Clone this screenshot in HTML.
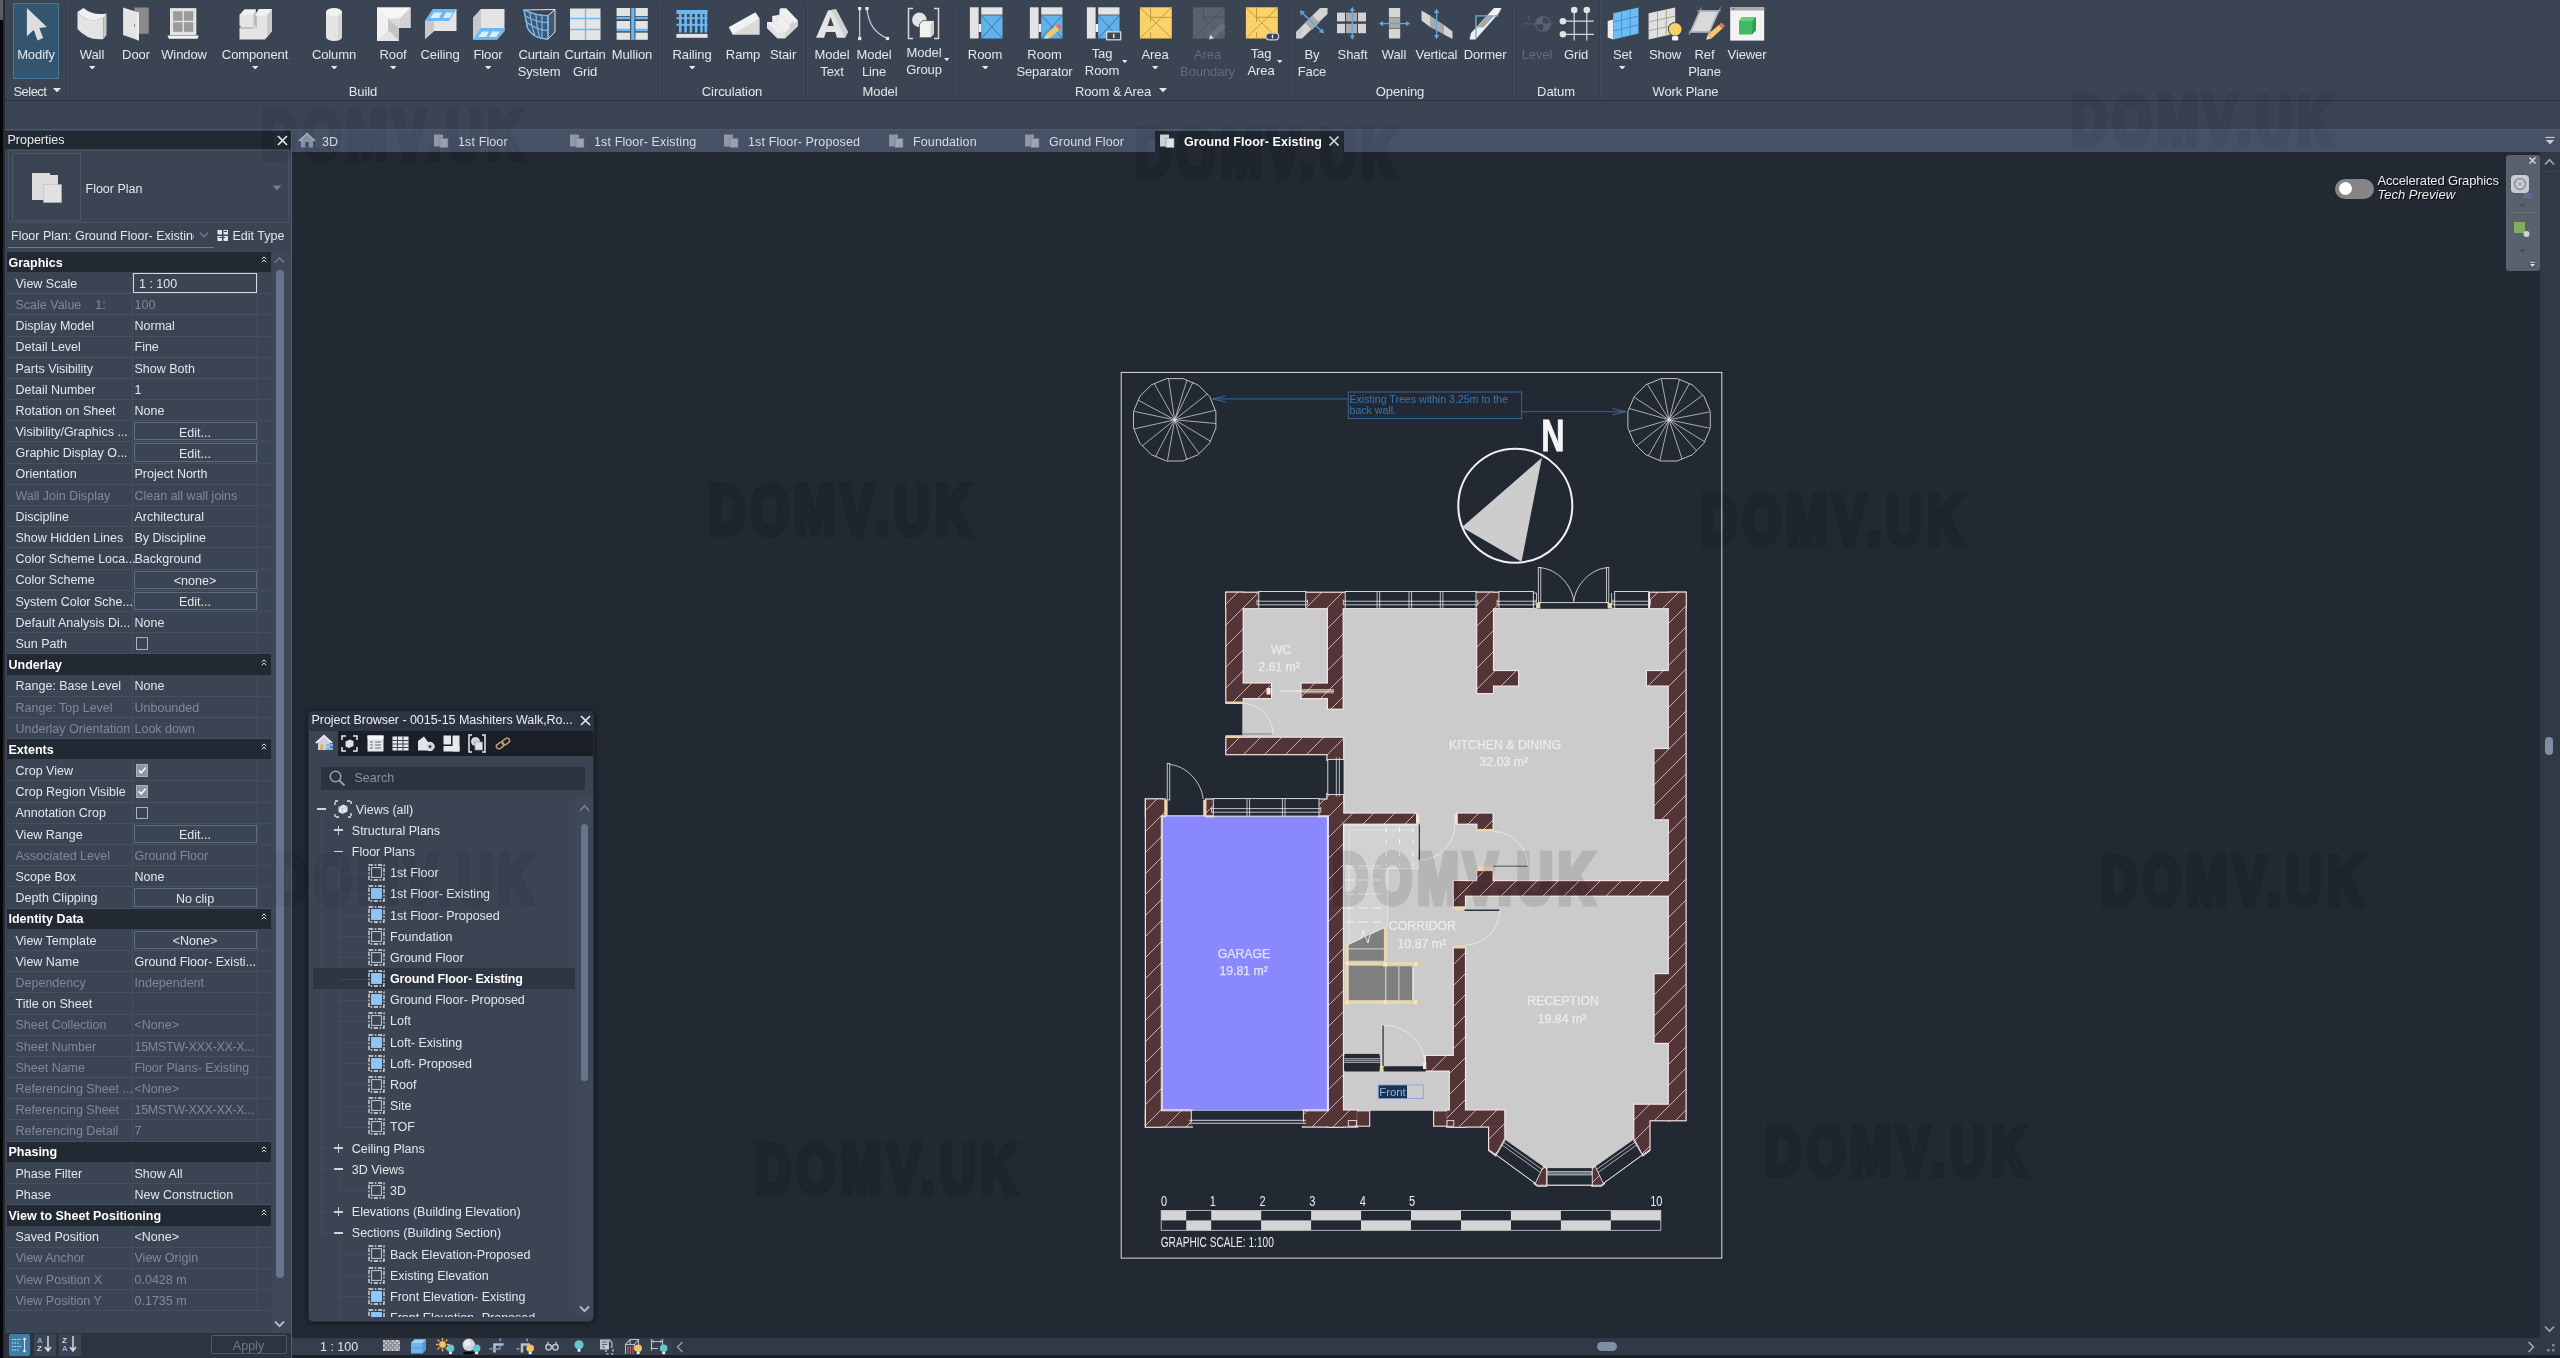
<!DOCTYPE html><html lang="en"><head><meta charset="utf-8"><title>Autodesk Revit - Ground Floor- Existing</title><style>
html,body{margin:0;padding:0;background:#222933;}
body{width:2560px;height:1358px;position:relative;overflow:hidden;font-family:"Liberation Sans",sans-serif;}
.r{position:absolute;display:block;}
#app{position:absolute;left:0;top:0;width:2560px;height:1358px;overflow:hidden;will-change:transform;}
.t{position:absolute;white-space:nowrap;line-height:1;}
.wm{position:absolute;font-family:"Liberation Sans",sans-serif;font-weight:700;font-size:76px;line-height:1;color:rgb(5,5,5);-webkit-text-stroke:7.5px rgb(5,5,5);mix-blend-mode:difference;letter-spacing:8px;transform-origin:0 0;transform:scale(0.655,0.925);white-space:nowrap;}
.wm.n{color:#000;-webkit-text-stroke:7.5px #000;mix-blend-mode:normal;opacity:0.10;}

</style></head><body><div id="app">
<div class="r" style="left:0.00px;top:0.00px;width:2560.00px;height:129.00px;background:#3b4453;"></div>
<div class="r" style="left:4.00px;top:99.60px;width:2556.00px;height:1.70px;background:#2b323d;"></div>
<div class="r" style="left:292.00px;top:128.50px;width:2268.00px;height:23.50px;background:#475165;"></div>
<div class="r" style="left:4.00px;top:128.50px;width:2556.00px;height:1.50px;background:#4f5a6f;"></div>
<div class="r" style="left:292.00px;top:152.00px;width:2268.00px;height:1206.00px;background:#222933;"></div>
<div class="r" style="left:4.00px;top:130.00px;width:288.00px;height:1228.00px;background:#3b4453;"></div>
<div class="r" style="left:290.60px;top:130.00px;width:1.40px;height:1228.00px;background:#535e71;"></div>
<svg class="r" style="left:0;top:0" width="1" height="1"><defs><pattern id="ih" patternUnits="userSpaceOnUse" width="2.6" height="2.6"><rect width="2.6" height="2.6" fill="#e2e2e2"/><path d="M-0.5 3.100 L3.100 -0.5 M-0.5 0.5 L0.5 -0.5 M2.100 3.100 L3.100 2.100" stroke="#b4b4b4" stroke-width="0.750"/></pattern></defs></svg>
<div class="r" style="left:13.00px;top:3.00px;width:46.00px;height:76.00px;background:#34556f;border:1px solid #46769b;box-sizing:border-box;"></div>
<div class="t" style="top:48.00px;font-size:13px;color:#e4e6ea;letter-spacing:-0.1px;left:-164.00px;width:400px;text-align:center;">Modify</div>
<svg class="r" style="left:18.00px;top:4px" width="36" height="40" viewBox="0 0 36 40" overflow="visible"><path d="M8.900 4.100 L8.900 32.300 L15.800 26 L19.500 36.600 L25.100 34.100 L21.400 24.100 L28.900 22.900 Z" fill="#dedede"/></svg>
<div class="t" style="top:48.00px;font-size:13px;color:#e4e6ea;letter-spacing:-0.1px;left:-108.00px;width:400px;text-align:center;">Wall</div>
<svg class="r" style="left:88.75px;top:65.50px" width="6.5" height="3.6" viewBox="0 0 6.5 3.6"><path d="M0 0 H6.5 L3.25 3.6 Z" fill="#e4e6ea"/></svg>
<svg class="r" style="left:74.00px;top:4px" width="36" height="40" viewBox="0 0 36 40" overflow="visible"><path d="M3.500 8 Q14 21 29.500 13.500 L29.500 35 Q14 37 3.500 25 Z" fill="#e4e4e4"/><path d="M3.500 8 L9.500 4 Q19 12 32.500 9.500 L29.500 13.500 Q14 21 3.500 8 Z" fill="#f1f1f1"/><path d="M29.500 13.500 L32.500 9.500 L32.500 31 L29.500 35 Z" fill="#c8c8c8"/></svg>
<div class="t" style="top:48.00px;font-size:13px;color:#e4e6ea;letter-spacing:-0.1px;left:-64.00px;width:400px;text-align:center;">Door</div>
<svg class="r" style="left:118.00px;top:4px" width="36" height="40" viewBox="0 0 36 40" overflow="visible"><rect x="16.400" y="3.500" width="14.400" height="26.300" fill="#8b8b8b"/><path d="M5.100 3.500 L20.800 8.500 L20.800 36.600 L5.100 31 Z" fill="#e4e4e4"/><path d="M18.800 8 L20.800 8.500 L20.800 36.600 L18.800 35.900Z" fill="#f1f1f1"/><rect x="16" y="20" width="1" height="3" fill="#8b8b8b"/></svg>
<div class="t" style="top:48.00px;font-size:13px;color:#e4e6ea;letter-spacing:-0.1px;left:-16.00px;width:400px;text-align:center;">Window</div>
<svg class="r" style="left:166.00px;top:4px" width="36" height="40" viewBox="0 0 36 40" overflow="visible"><rect x="4" y="4.100" width="26.300" height="27" fill="#e4e4e4"/><rect x="7.1" y="7.2" width="9.400" height="9.600" fill="#9b9b9b"/><rect x="7.1" y="18.2" width="9.400" height="9.600" fill="#9b9b9b"/><rect x="17.9" y="7.2" width="9.400" height="9.600" fill="#9b9b9b"/><rect x="17.9" y="18.2" width="9.400" height="9.600" fill="#9b9b9b"/><path d="M1.500 31.600 H32.800 L31.500 34.800 H2.800 Z" fill="#f1f1f1"/></svg>
<div class="t" style="top:48.00px;font-size:13px;color:#e4e6ea;letter-spacing:-0.1px;left:55.00px;width:400px;text-align:center;">Component</div>
<svg class="r" style="left:251.75px;top:65.50px" width="6.5" height="3.6" viewBox="0 0 6.5 3.6"><path d="M0 0 H6.5 L3.25 3.6 Z" fill="#e4e6ea"/></svg>
<svg class="r" style="left:237.00px;top:4px" width="36" height="40" viewBox="0 0 36 40" overflow="visible"><path d="M2.500 11 L7.500 5.500 L19 5.500 L19 9 L22 5 L35 5 L35 27 L28 35.500 L2.500 35.500 L2.500 24 L4 22 L2.500 22 Z" fill="#e4e4e4"/><path d="M22 5 L35 5 L30 11.500 L19.500 11.500Z" fill="#f1f1f1"/><path d="M30 11.500 L35 5 L35 27 L30 33.500 Z" fill="#c8c8c8"/><path d="M2.500 11 L7.500 5.500 L19 5.500 L16 11 Z" fill="#f1f1f1"/><path d="M16 11 L19 5.500 L19 20 L16 22.500Z" fill="#c8c8c8"/><path d="M2.500 24 L17 24 M19 12 L19 24" stroke="#8f8f8f" stroke-width="0.8" fill="none"/></svg>
<div class="t" style="top:48.00px;font-size:13px;color:#e4e6ea;letter-spacing:-0.1px;left:134.00px;width:400px;text-align:center;">Column</div>
<svg class="r" style="left:330.75px;top:65.50px" width="6.5" height="3.6" viewBox="0 0 6.5 3.6"><path d="M0 0 H6.5 L3.25 3.6 Z" fill="#e4e6ea"/></svg>
<svg class="r" style="left:316.00px;top:4px" width="36" height="40" viewBox="0 0 36 40" overflow="visible"><path d="M10 8 L10 33 A8 4 0 0 0 26 33 L26 8 Z" fill="#e4e4e4"/><ellipse cx="18" cy="8" rx="8" ry="4" fill="#f1f1f1"/><path d="M22 11.500 L22 36.400 A8 4 0 0 0 26 33 L26 8 A8 4 0 0 1 22 11.500" fill="#d6d6d6"/></svg>
<div class="t" style="top:48.00px;font-size:13px;color:#e4e6ea;letter-spacing:-0.1px;left:193.00px;width:400px;text-align:center;">Roof</div>
<svg class="r" style="left:389.75px;top:65.50px" width="6.5" height="3.6" viewBox="0 0 6.5 3.6"><path d="M0 0 H6.5 L3.25 3.6 Z" fill="#e4e6ea"/></svg>
<svg class="r" style="left:375.00px;top:4px" width="36" height="40" viewBox="0 0 36 40" overflow="visible"><path d="M2 3.500 H35.500 V24 H24 V37 H2 Z" fill="#e4e4e4"/><path d="M2 3.500 L13 14.500 L13 26 L2 37 Z" fill="#f1f1f1"/><path d="M2 3.500 H35.500 L25 14.500 H13 Z" fill="#f6f6f6"/><path d="M35.500 3.500 V24 H24 L25 14.500Z" fill="#d2d2d2"/><path d="M13 14.500 L24 24 V37 L13 26Z" fill="#c4c4c4"/><path d="M13 14.500 H25 L24 24Z" fill="#dadada"/></svg>
<div class="t" style="top:48.00px;font-size:13px;color:#e4e6ea;letter-spacing:-0.1px;left:240.00px;width:400px;text-align:center;">Ceiling</div>
<svg class="r" style="left:422.00px;top:4px" width="36" height="40" viewBox="0 0 36 40" overflow="visible"><path d="M3 17 L11 5 L34.500 5 L34.500 27 L12 27 L3 35 Z" fill="#e4e4e4"/><path d="M3 17 L11 5 L34.500 5 L27 17 Z" fill="#6cb8f3"/><path d="M8 14 L12 8.500 L20 8.500 L17 14Z M21 14 L24 8.500 L31 8.500 L27.500 14Z" fill="#d8eefc"/><path d="M3 17 L12 17 L12 27 L3 35Z" fill="#c8c8c8"/></svg>
<div class="t" style="top:48.00px;font-size:13px;color:#e4e6ea;letter-spacing:-0.1px;left:288.00px;width:400px;text-align:center;">Floor</div>
<svg class="r" style="left:484.75px;top:65.50px" width="6.5" height="3.6" viewBox="0 0 6.5 3.6"><path d="M0 0 H6.5 L3.25 3.6 Z" fill="#e4e6ea"/></svg>
<svg class="r" style="left:470.00px;top:4px" width="36" height="40" viewBox="0 0 36 40" overflow="visible"><path d="M3 14 L11 5 L34.500 5 L34.500 27 L27 35.500 L3 35.500 Z" fill="#e4e4e4"/><path d="M3 14 L11 5 L11 24 L3 35.500Z" fill="#c8c8c8"/><path d="M3 35.500 L11 24 L34.500 24 L34.500 27 L27 35.500 Z" fill="#6cb8f3"/><path d="M8 33 L12 27.500 L19 27.500 L16 33Z M19 33 L22 27.500 L30 27.500 L26 33Z" fill="#d8eefc"/></svg>
<div class="t" style="top:48.00px;font-size:13px;color:#e4e6ea;letter-spacing:-0.1px;left:339.00px;width:400px;text-align:center;">Curtain</div>
<div class="t" style="top:65.00px;font-size:13px;color:#e4e6ea;letter-spacing:-0.1px;left:339.00px;width:400px;text-align:center;">System</div>
<svg class="r" style="left:521.00px;top:4px" width="36" height="40" viewBox="0 0 36 40" overflow="visible"><path d="M3 6 Q16 12 27 11.500 L34 5.500 L34 28 L27 35 Q12 35 6.500 24 Z" fill="#46576e" stroke="#e4e4e4" stroke-width="1"/><path d="M3 6 L34 5.500 M27 11.500 V35" stroke="#e4e4e4" stroke-width="1" fill="none"/><path d="M4.500 12 Q15 18.500 27 18.500 M5.500 18 Q15 26 27 26.500 M9 8.500 Q10 22 14 31.500 M15 10.500 Q15.500 24 19 34 M21 11.500 V35" stroke="#6cb8f3" stroke-width="1.300" fill="none"/><path d="M3 6 Q16 12 27 11.500 V35 Q12 35 6.500 24 Z" fill="none" stroke="#6cb8f3" stroke-width="1.300"/></svg>
<div class="t" style="top:48.00px;font-size:13px;color:#e4e6ea;letter-spacing:-0.1px;left:385.00px;width:400px;text-align:center;">Curtain</div>
<div class="t" style="top:65.00px;font-size:13px;color:#e4e6ea;letter-spacing:-0.1px;left:385.00px;width:400px;text-align:center;">Grid</div>
<svg class="r" style="left:567.00px;top:4px" width="36" height="40" viewBox="0 0 36 40" overflow="visible"><rect x="3" y="4.500" width="30.500" height="31.500" fill="#e4e4e4"/><path d="M18.500 4.500 V36 M3 14.500 H33.500 M3 25.500 H33.500" stroke="#6cb8f3" stroke-width="1.300"/></svg>
<div class="t" style="top:48.00px;font-size:13px;color:#e4e6ea;letter-spacing:-0.1px;left:432.00px;width:400px;text-align:center;">Mullion</div>
<svg class="r" style="left:614.00px;top:4px" width="36" height="40" viewBox="0 0 36 40" overflow="visible"><rect x="2.600" y="4" width="31.200" height="8" fill="#e4e4e4"/><rect x="2.600" y="17" width="31.200" height="8" fill="#e4e4e4"/><rect x="2.600" y="28.6" width="31.200" height="7.2" fill="#e4e4e4"/><rect x="2.600" y="12.700" width="31.200" height="2.600" fill="#6cb8f3"/><rect x="2.600" y="24.700" width="31.200" height="2.600" fill="#6cb8f3"/><rect x="16" y="4" width="5.500" height="31.800" fill="#46556b"/><rect x="17.200" y="4" width="3.200" height="31.800" fill="#6cb8f3"/></svg>
<div class="t" style="top:48.00px;font-size:13px;color:#e4e6ea;letter-spacing:-0.1px;left:492.00px;width:400px;text-align:center;">Railing</div>
<svg class="r" style="left:688.75px;top:65.50px" width="6.5" height="3.6" viewBox="0 0 6.5 3.6"><path d="M0 0 H6.5 L3.25 3.6 Z" fill="#e4e6ea"/></svg>
<svg class="r" style="left:674.00px;top:4px" width="36" height="40" viewBox="0 0 36 40" overflow="visible"><rect x="2.400" y="6" width="31.200" height="4" fill="#6cb8f3"/><rect x="2.400" y="13.300" width="31.200" height="1.800" fill="#6cb8f3"/><rect x="2.400" y="19.800" width="31.200" height="2" fill="#6cb8f3"/><rect x="5" y="10" width="2.600" height="18.600" fill="#6cb8f3"/><rect x="10.3" y="10" width="2.600" height="18.600" fill="#6cb8f3"/><rect x="15.6" y="10" width="2.600" height="18.600" fill="#6cb8f3"/><rect x="20.9" y="10" width="2.600" height="18.600" fill="#6cb8f3"/><rect x="26.2" y="10" width="2.600" height="18.600" fill="#6cb8f3"/><rect x="30.5" y="10" width="2.600" height="18.600" fill="#6cb8f3"/><rect x="2.400" y="29.900" width="31.200" height="3.900" fill="#e4e4e4"/></svg>
<div class="t" style="top:48.00px;font-size:13px;color:#e4e6ea;letter-spacing:-0.1px;left:543.00px;width:400px;text-align:center;">Ramp</div>
<svg class="r" style="left:725.00px;top:4px" width="36" height="40" viewBox="0 0 36 40" overflow="visible"><path d="M3.900 23.200 L30.400 8.600 L34.400 14.600 L34.400 30.500 L7.800 30.500 Z" fill="#e4e4e4"/><path d="M3.900 23.200 L30.400 8.600 L34.400 14.600 L7.800 30.500 Z" fill="#f1f1f1"/><path d="M7.800 30.500 L34.400 14.600 L34.400 30.500Z" fill="#d9d9d9"/></svg>
<div class="t" style="top:48.00px;font-size:13px;color:#e4e6ea;letter-spacing:-0.1px;left:583.00px;width:400px;text-align:center;">Stair</div>
<svg class="r" style="left:765.00px;top:4px" width="36" height="40" viewBox="0 0 36 40" overflow="visible"><path d="M15.200 4.200 L21.200 4.200 L32.700 16.200 L32.700 22.200 L20.100 34.300 L12.400 34.300 L2 23.900 L2 17.900 L7.500 17.900 L7.500 11.900 L14.600 10.800 Z" fill="#f0f0f0"/><path d="M2 17.900 L2 23.900 L12.400 34.300 L20.100 34.300 L20.100 28.500 L12.400 28.500 Z" fill="#e2e2e2"/><path d="M20.100 34.300 L32.700 22.200 L32.700 16.200 L28.500 20 L28.500 16.500 L24.500 20.500 L24.500 24 L20.100 28.500 Z" fill="#d2d2d2"/><path d="M7.500 11.900 L7.500 17.900 L18 28.300 M14.600 10.800 L14.800 5 M14.600 10.800 L24.500 20.500 M7.500 17.900 L12.500 17.200 L12.500 12.500" stroke="#d8d8d8" stroke-width="0.7" fill="none"/></svg>
<div class="t" style="top:48.00px;font-size:13px;color:#e4e6ea;letter-spacing:-0.1px;left:632.00px;width:400px;text-align:center;">Model</div>
<div class="t" style="top:65.00px;font-size:13px;color:#e4e6ea;letter-spacing:-0.1px;left:632.00px;width:400px;text-align:center;">Text</div>
<svg class="r" style="left:814.00px;top:4px" width="36" height="40" viewBox="0 0 36 40" overflow="visible"><path d="M2 33.800 L14 6.500 L22 5.300 L34 28 L31 33.800 L23 33.800 L21.200 28 L12 28 L10 33.800 Z" fill="#e4e4e4"/><path d="M14 6.500 L22 5.300 L34 28 L31 33.800 L17.500 6.200Z" fill="#cfcfcf"/><path d="M13.500 22 L16.500 13 L19.700 22 Z" fill="#3b4453"/></svg>
<div class="t" style="top:48.00px;font-size:13px;color:#e4e6ea;letter-spacing:-0.1px;left:674.00px;width:400px;text-align:center;">Model</div>
<div class="t" style="top:65.00px;font-size:13px;color:#e4e6ea;letter-spacing:-0.1px;left:674.00px;width:400px;text-align:center;">Line</div>
<svg class="r" style="left:856.00px;top:4px" width="36" height="40" viewBox="0 0 36 40" overflow="visible"><path d="M3.700 5 V34" stroke="#cfd3d8" stroke-width="1.200"/><path d="M11 5 Q13 27 31.500 34.500" stroke="#cfd3d8" stroke-width="1.200" fill="none"/><rect x="2.1" y="2.9999999999999996" width="3.200" height="3.200" fill="#e8e8e8"/><rect x="2.1" y="32.9" width="3.200" height="3.200" fill="#e8e8e8"/><rect x="9.4" y="2.9999999999999996" width="3.200" height="3.200" fill="#e8e8e8"/><rect x="29.9" y="32.9" width="3.200" height="3.200" fill="#e8e8e8"/></svg>
<div class="t" style="top:46.00px;font-size:13px;color:#e4e6ea;letter-spacing:-0.1px;left:724.00px;width:400px;text-align:center;">Model</div>
<div class="t" style="top:63.00px;font-size:13px;color:#e4e6ea;letter-spacing:-0.1px;left:724.00px;width:400px;text-align:center;">Group</div>
<svg class="r" style="left:943.75px;top:57.90px" width="5.5" height="3.2" viewBox="0 0 5.5 3.2"><path d="M0 0 H5.5 L2.75 3.2 Z" fill="#e4e6ea"/></svg>
<svg class="r" style="left:906.00px;top:4px" width="36" height="40" viewBox="0 0 36 40" overflow="visible"><path d="M7 4.600 H2.500 V34.500 H7 M28 4.600 H32.500 V34.500 H28" fill="none" stroke="#d5d8dc" stroke-width="1.500"/><circle cx="13.400" cy="15.900" r="7.300" fill="#e4e4e4"/><path d="M13.400 20 L17 16.600 L28 16.600 L28 30 L24.500 33.800 L13.400 33.800Z" fill="#f1f1f1" stroke="#3b4453" stroke-width="0.8"/><path d="M24.500 20.500 L28 16.600 L28 30 L24.500 33.800Z" fill="#cfcfcf"/></svg>
<div class="t" style="top:48.00px;font-size:13px;color:#e4e6ea;letter-spacing:-0.1px;left:785.00px;width:400px;text-align:center;">Room</div>
<svg class="r" style="left:981.75px;top:65.50px" width="6.5" height="3.6" viewBox="0 0 6.5 3.6"><path d="M0 0 H6.5 L3.25 3.6 Z" fill="#e4e6ea"/></svg>
<svg class="r" style="left:967.00px;top:4px" width="36" height="40" viewBox="0 0 36 40" overflow="visible"><rect x="2.900" y="3.300" width="8.700" height="31.200" fill="#e4e4e4"/><rect x="14.200" y="3.300" width="21.300" height="7.300" fill="#e4e4e4"/><rect x="14.200" y="11.300" width="21.300" height="23.200" fill="#5fb2ea"/><path d="M14.200 11.300 L35.500 34.500 M35.500 11.300 L14.200 34.500" stroke="#4a6c8c" stroke-width="0.9"/><rect x="11.600" y="20" width="2.600" height="8" fill="#f1f1f1"/></svg>
<div class="t" style="top:48.00px;font-size:13px;color:#e4e6ea;letter-spacing:-0.1px;left:844.50px;width:400px;text-align:center;">Room</div>
<div class="t" style="top:65.00px;font-size:13px;color:#e4e6ea;letter-spacing:-0.1px;left:844.50px;width:400px;text-align:center;">Separator</div>
<svg class="r" style="left:1026.50px;top:4px" width="36" height="40" viewBox="0 0 36 40" overflow="visible"><rect x="2.900" y="3.300" width="8.700" height="31.200" fill="#e4e4e4"/><rect x="14.200" y="3.300" width="21.300" height="7.300" fill="#e4e4e4"/><rect x="14.200" y="11.300" width="21.300" height="23.200" fill="#5fb2ea"/><path d="M14.200 11.300 L35.500 34.500 M35.500 11.300 L14.200 34.500" stroke="#4a6c8c" stroke-width="0.9"/><rect x="11.600" y="20" width="2.600" height="8" fill="#f1f1f1"/><g transform="translate(17.5,35) rotate(-40.2)"><path d="M0 0 L4.500 -2.600 L4.500 2.600Z" fill="#d8d8d8"/><rect x="4.500" y="-2.600" width="12.9" height="5.200" fill="#f5c862"/><rect x="17.4" y="-2.600" width="3.500" height="5.200" rx="1" fill="#e86a6a"/></g></svg>
<div class="t" style="top:47.00px;font-size:13px;color:#e4e6ea;letter-spacing:-0.1px;left:902.00px;width:400px;text-align:center;">Tag</div>
<div class="t" style="top:64.00px;font-size:13px;color:#e4e6ea;letter-spacing:-0.1px;left:902.00px;width:400px;text-align:center;">Room</div>
<svg class="r" style="left:1122.25px;top:60.40px" width="5.5" height="3.2" viewBox="0 0 5.5 3.2"><path d="M0 0 H5.5 L2.75 3.2 Z" fill="#e4e6ea"/></svg>
<svg class="r" style="left:1084.00px;top:4px" width="36" height="40" viewBox="0 0 36 40" overflow="visible"><rect x="2.900" y="3.300" width="8.700" height="31.200" fill="#e4e4e4"/><rect x="14.200" y="3.300" width="21.300" height="7.300" fill="#e4e4e4"/><rect x="14.200" y="11.300" width="21.300" height="23.200" fill="#5fb2ea"/><path d="M14.200 11.300 L35.500 34.500 M35.500 11.300 L14.200 34.500" stroke="#4a6c8c" stroke-width="0.9"/><rect x="11.600" y="20" width="2.600" height="8" fill="#f1f1f1"/><rect x="22.700" y="27.900" width="14" height="7.900" fill="#3b4453" stroke="#e0e0e0" stroke-width="1.200"/><rect x="29" y="29.800" width="1.400" height="4.200" fill="#f0f0f0"/></svg>
<div class="t" style="top:48.00px;font-size:13px;color:#e4e6ea;letter-spacing:-0.1px;left:955.00px;width:400px;text-align:center;">Area</div>
<svg class="r" style="left:1151.75px;top:65.50px" width="6.5" height="3.6" viewBox="0 0 6.5 3.6"><path d="M0 0 H6.5 L3.25 3.6 Z" fill="#e4e6ea"/></svg>
<svg class="r" style="left:1137.00px;top:4px" width="36" height="40" viewBox="0 0 36 40" overflow="visible"><rect x="2.900" y="3.300" width="31.900" height="31.200" fill="#fbd267"/><path d="M2.900 3.300 L34.800 34.500 M34.800 3.300 L2.900 34.500 M13.500 3.300 V18 M13.500 13.300 H34.800 M13.500 28 V34.500" stroke="#b89748" stroke-width="0.9" fill="none"/></svg>
<div class="t" style="top:48.00px;font-size:13px;color:#626b7b;letter-spacing:-0.1px;left:1007.50px;width:400px;text-align:center;">Area</div>
<div class="t" style="top:65.00px;font-size:13px;color:#626b7b;letter-spacing:-0.1px;left:1007.50px;width:400px;text-align:center;">Boundary</div>
<svg class="r" style="left:1189.50px;top:4px" width="36" height="40" viewBox="0 0 36 40" overflow="visible"><rect x="2.900" y="3.300" width="31.900" height="31.200" fill="#5b626e"/><path d="M2.900 3.300 L34.800 34.500 M34.800 3.300 L2.900 34.500 M13.500 3.300 V18 M13.500 13.300 H34.800 M13.500 28 V34.500" stroke="#4b525e" stroke-width="0.9" fill="none"/><g transform="translate(19,35.5) rotate(-44.0)"><path d="M0 0 L4.500 -2.600 L4.500 2.600Z" fill="#d8d8d8"/><rect x="4.500" y="-2.600" width="12.9" height="5.200" fill="#69707c"/><rect x="17.4" y="-2.600" width="3.500" height="5.200" rx="1" fill="#69707c"/></g></svg>
<div class="t" style="top:47.00px;font-size:13px;color:#e4e6ea;letter-spacing:-0.1px;left:1061.00px;width:400px;text-align:center;">Tag</div>
<div class="t" style="top:64.00px;font-size:13px;color:#e4e6ea;letter-spacing:-0.1px;left:1061.00px;width:400px;text-align:center;">Area</div>
<svg class="r" style="left:1277.25px;top:60.40px" width="5.5" height="3.2" viewBox="0 0 5.5 3.2"><path d="M0 0 H5.5 L2.75 3.2 Z" fill="#e4e6ea"/></svg>
<svg class="r" style="left:1243.00px;top:4px" width="36" height="40" viewBox="0 0 36 40" overflow="visible"><rect x="2.900" y="3.300" width="31.900" height="31.200" fill="#fbd267"/><path d="M2.900 3.300 L34.800 34.500 M34.800 3.300 L2.900 34.500 M13.500 3.300 V18 M13.500 13.300 H34.800 M13.500 28 V34.500" stroke="#b89748" stroke-width="0.9" fill="none"/><rect x="23" y="29.200" width="12.700" height="6.600" rx="3.300" fill="#3b4453" stroke="#c9ccd2" stroke-width="1.200"/><rect x="28.800" y="30.700" width="1.300" height="3.600" fill="#f0f0f0"/></svg>
<div class="t" style="top:48.00px;font-size:13px;color:#e4e6ea;letter-spacing:-0.1px;left:1112.00px;width:400px;text-align:center;">By</div>
<div class="t" style="top:65.00px;font-size:13px;color:#e4e6ea;letter-spacing:-0.1px;left:1112.00px;width:400px;text-align:center;">Face</div>
<svg class="r" style="left:1294.00px;top:4px" width="36" height="40" viewBox="0 0 36 40" overflow="visible"><path d="M2 28 L26 4 L33.500 4 L33.500 10 L8 34.500 L2 34.500 Z" fill="url(#ih)"/><path d="M11 19 L18.500 11.500 L25.500 18.500 L18 26 Z" fill="#a9a9a9"/><path d="M3.0 33.5 v-5" stroke="#9f9f9f" stroke-width="0.5"/><path d="M5.2 31.299999999999997 v-5" stroke="#9f9f9f" stroke-width="0.5"/><path d="M7.4 29.1 v-5" stroke="#9f9f9f" stroke-width="0.5"/><path d="M7.300 8 L28.500 27.900" stroke="#5fa8e0" stroke-width="1.400"/><path d="M5.800 6.600 L11 7.600 L7 11.500Z M30 29.300 L24.800 28.300 L28.800 24.400Z" fill="#5fa8e0"/></svg>
<div class="t" style="top:48.00px;font-size:13px;color:#e4e6ea;letter-spacing:-0.1px;left:1152.50px;width:400px;text-align:center;">Shaft</div>
<svg class="r" style="left:1334.50px;top:4px" width="36" height="40" viewBox="0 0 36 40" overflow="visible"><rect x="2" y="8.6" width="8" height="8.8" fill="url(#ih)"/><rect x="11" y="8.6" width="11" height="8.8" fill="#a9a9a9"/><rect x="23" y="8.6" width="8" height="8.8" fill="url(#ih)"/><rect x="2" y="19.8" width="8" height="9.4" fill="url(#ih)"/><rect x="11" y="19.8" width="11" height="9.4" fill="#a9a9a9"/><rect x="23" y="19.8" width="8" height="9.4" fill="url(#ih)"/><path d="M17.300 5 V33.500" stroke="#5fa8e0" stroke-width="1.300"/><path d="M17.300 2.800 L20 7 H14.600Z M17.300 35.700 L20 31.500 H14.600Z" fill="#5fa8e0"/></svg>
<div class="t" style="top:48.00px;font-size:13px;color:#e4e6ea;letter-spacing:-0.1px;left:1194.00px;width:400px;text-align:center;">Wall</div>
<svg class="r" style="left:1376.00px;top:4px" width="36" height="40" viewBox="0 0 36 40" overflow="visible"><rect x="12.9" y="4" width="11.3" height="9.5" fill="url(#ih)"/><rect x="12.9" y="14" width="11.3" height="10.5" fill="#a9a9a9"/><rect x="12.9" y="25" width="11.3" height="9.5" fill="url(#ih)"/><path d="M5 19.600 H31" stroke="#5fa8e0" stroke-width="1.300"/><path d="M2.800 19.600 L7 16.900 V22.300Z M34.200 19.600 L30 16.900 V22.300Z" fill="#5fa8e0"/></svg>
<div class="t" style="top:48.00px;font-size:13px;color:#e4e6ea;letter-spacing:-0.1px;left:1236.50px;width:400px;text-align:center;">Vertical</div>
<svg class="r" style="left:1418.50px;top:4px" width="36" height="40" viewBox="0 0 36 40" overflow="visible"><path d="M2.500 6.500 L11 11.500 L11 23 L2.500 16.500Z M25 21 L33.500 27.500 L33.500 35 L25 30.500Z" fill="url(#ih)"/><path d="M11 11.500 L25 21 L25 30.500 L11 23Z" fill="#a9a9a9"/><path d="M17.600 7 V33" stroke="#5fa8e0" stroke-width="1.300"/><path d="M17.600 4.800 L20.300 9 H14.900Z M17.600 35.200 L20.300 31 H14.900Z" fill="#5fa8e0"/></svg>
<div class="t" style="top:48.00px;font-size:13px;color:#e4e6ea;letter-spacing:-0.1px;left:1285.00px;width:400px;text-align:center;">Dormer</div>
<svg class="r" style="left:1467.00px;top:4px" width="36" height="40" viewBox="0 0 36 40" overflow="visible"><path d="M2.500 35.500 L4 29 L27 4 L34.500 4 L32 9 L8.500 35.500 Z" fill="#f1f1f1"/><path d="M9.500 23.500 L20 12 L27 12 L16.500 23.500Z" fill="#a9a9a9"/><path d="M8.900 34.500 V11.900 H31.500" fill="none" stroke="#6aaee2" stroke-width="1.400"/></svg>
<div class="t" style="top:48.00px;font-size:13px;color:#626b7b;letter-spacing:-0.1px;left:1337.00px;width:400px;text-align:center;">Level</div>
<svg class="r" style="left:1519.00px;top:4px" width="36" height="40" viewBox="0 0 36 40" overflow="visible"><path d="M5 19.900 H35" stroke="#59616f" stroke-width="1"/><circle cx="24" cy="19.900" r="7.300" fill="none" stroke="#59616f" stroke-width="1.300"/><path d="M24 19.900 L24 12.600 A7.300 7.300 0 0 0 16.700 19.900Z M24 19.900 L24 27.200 A7.300 7.300 0 0 0 31.300 19.900Z" fill="#59616f"/><path d="M8.500 12.500 L10 11.500 V17" stroke="#59616f" stroke-width="1" fill="none"/></svg>
<div class="t" style="top:48.00px;font-size:13px;color:#e4e6ea;letter-spacing:-0.1px;left:1376.00px;width:400px;text-align:center;">Grid</div>
<svg class="r" style="left:1558.00px;top:4px" width="36" height="40" viewBox="0 0 36 40" overflow="visible"><path d="M16.200 6 V36.500 M28.800 6 V36.500 M5 17.200 H36 M5 30.300 H36" stroke="#d9d9d9" stroke-width="1.200"/><circle cx="16.2" cy="6" r="3.300" fill="#e2e2e2"/><circle cx="28.8" cy="6" r="3.300" fill="#e2e2e2"/><circle cx="4.9" cy="17.2" r="3.300" fill="#e2e2e2"/><circle cx="4.9" cy="30.3" r="3.300" fill="#e2e2e2"/></svg>
<div class="t" style="top:48.00px;font-size:13px;color:#e4e6ea;letter-spacing:-0.1px;left:1422.50px;width:400px;text-align:center;">Set</div>
<svg class="r" style="left:1619.25px;top:65.50px" width="6.5" height="3.6" viewBox="0 0 6.5 3.6"><path d="M0 0 H6.5 L3.25 3.6 Z" fill="#e4e6ea"/></svg>
<svg class="r" style="left:1604.50px;top:4px" width="36" height="40" viewBox="0 0 36 40" overflow="visible"><path d="M2.700 17.100 L8.200 15.500 V35.500 L2.700 33.500Z" fill="#ececec"/><path d="M8.200 9.300 L33.500 3.400 V29.600 L8.200 35.500Z" fill="#6ebbf5"/><path d="M16.6 7.3 V33.5" stroke="#3b8ed4" stroke-width="0.9"/><path d="M8.200 18.0 L33.500 12.1" stroke="#3b8ed4" stroke-width="0.9"/><path d="M25.1 5.4 V31.6" stroke="#3b8ed4" stroke-width="0.9"/><path d="M8.200 26.8 L33.500 20.9" stroke="#3b8ed4" stroke-width="0.9"/></svg>
<div class="t" style="top:48.00px;font-size:13px;color:#e4e6ea;letter-spacing:-0.1px;left:1465.00px;width:400px;text-align:center;">Show</div>
<svg class="r" style="left:1647.00px;top:4px" width="36" height="40" viewBox="0 0 36 40" overflow="visible"><path d="M1.600 9.300 L28.200 3.400 V29.600 L1.600 35.500Z" fill="#e0e0e0"/><path d="M10.5 7.3 V33.5" stroke="#a89c84" stroke-width="0.9"/><path d="M1.600 18.0 L28.200 12.1" stroke="#a89c84" stroke-width="0.9"/><path d="M19.3 5.4 V31.6" stroke="#a89c84" stroke-width="0.9"/><path d="M1.600 26.8 L28.200 20.9" stroke="#a89c84" stroke-width="0.9"/><circle cx="28.200" cy="25.300" r="7.300" fill="#3b4453"/><circle cx="28.200" cy="25.300" r="6.300" fill="#f9d265"/><rect x="25" y="32" width="6.300" height="4.600" rx="1.500" fill="#f2f2f2"/></svg>
<div class="t" style="top:48.00px;font-size:13px;color:#e4e6ea;letter-spacing:-0.1px;left:1504.50px;width:400px;text-align:center;">Ref</div>
<div class="t" style="top:65.00px;font-size:13px;color:#e4e6ea;letter-spacing:-0.1px;left:1504.50px;width:400px;text-align:center;">Plane</div>
<svg class="r" style="left:1686.50px;top:4px" width="36" height="40" viewBox="0 0 36 40" overflow="visible"><path d="M12.900 6.900 L31.600 6.900 L22.300 28 L3.500 28Z" fill="#d9d9d9" stroke="#a9afb8" stroke-width="1.500"/><path d="M14.500 3.500 L2 31 M33.500 3.500 L21 31 M10 6.900 H34 M1.500 28 H25" stroke="#a9afb8" stroke-width="0.9"/><g transform="translate(19.1,35.8) rotate(-42.2)"><path d="M0 0 L4.500 -2.600 L4.500 2.600Z" fill="#d8d8d8"/><rect x="4.500" y="-2.600" width="15.2" height="5.200" fill="#f5c862"/><rect x="19.7" y="-2.600" width="3.500" height="5.200" rx="1" fill="#e86a6a"/></g></svg>
<div class="t" style="top:48.00px;font-size:13px;color:#e4e6ea;letter-spacing:-0.1px;left:1547.00px;width:400px;text-align:center;">Viewer</div>
<svg class="r" style="left:1729.00px;top:4px" width="36" height="40" viewBox="0 0 36 40" overflow="visible"><rect x="1.200" y="3.400" width="34" height="33.200" fill="#f3f3f3"/><rect x="1.200" y="3.400" width="34" height="3.100" fill="#a9a9a9"/><circle cx="4.500" cy="5" r="0.900" fill="#6d6d6d"/><path d="M10 17 L13 13 L27 13 L27 26 L23 30.500 L10 30.500Z" fill="#3fba66"/><path d="M10 17 L13 13 L27 13 L23.500 17Z" fill="#5fd083"/><path d="M23.500 17 L27 13 L27 26 L23 30.500Z" fill="#2f9d52"/></svg>
<div class="t" style="top:85.00px;font-size:13px;color:#e4e6ea;letter-spacing:-0.55px;left:13.50px;">Select</div>
<svg class="r" style="left:52.50px;top:87.60px" width="8" height="4.4" viewBox="0 0 8 4.4"><path d="M0 0 H8 L4.0 4.4 Z" fill="#e4e6ea"/></svg>
<div class="t" style="top:85.00px;font-size:13px;color:#e4e6ea;letter-spacing:-0.1px;left:163.00px;width:400px;text-align:center;">Build</div>
<div class="t" style="top:85.00px;font-size:13px;color:#e4e6ea;letter-spacing:-0.1px;left:532.00px;width:400px;text-align:center;">Circulation</div>
<div class="t" style="top:85.00px;font-size:13px;color:#e4e6ea;letter-spacing:-0.1px;left:680.00px;width:400px;text-align:center;">Model</div>
<div class="t" style="top:85.00px;font-size:13px;color:#e4e6ea;letter-spacing:-0.1px;left:913.00px;width:400px;text-align:center;">Room &amp; Area</div>
<div class="t" style="top:85.00px;font-size:13px;color:#e4e6ea;letter-spacing:-0.1px;left:1200.00px;width:400px;text-align:center;">Opening</div>
<div class="t" style="top:85.00px;font-size:13px;color:#e4e6ea;letter-spacing:-0.1px;left:1356.00px;width:400px;text-align:center;">Datum</div>
<div class="t" style="top:85.00px;font-size:13px;color:#e4e6ea;letter-spacing:-0.1px;left:1485.50px;width:400px;text-align:center;">Work Plane</div>
<svg class="r" style="left:1158.50px;top:87.60px" width="8" height="4.4" viewBox="0 0 8 4.4"><path d="M0 0 H8 L4.0 4.4 Z" fill="#e4e6ea"/></svg>
<div class="r" style="left:65.50px;top:2.00px;width:1.00px;height:96.00px;background:#353d4b;"></div>
<div class="r" style="left:66.50px;top:2.00px;width:1.00px;height:96.00px;background:#424c5c;"></div>
<div class="r" style="left:657.70px;top:2.00px;width:1.00px;height:96.00px;background:#353d4b;"></div>
<div class="r" style="left:658.70px;top:2.00px;width:1.00px;height:96.00px;background:#424c5c;"></div>
<div class="r" style="left:805.50px;top:2.00px;width:1.00px;height:96.00px;background:#353d4b;"></div>
<div class="r" style="left:806.50px;top:2.00px;width:1.00px;height:96.00px;background:#424c5c;"></div>
<div class="r" style="left:952.50px;top:2.00px;width:1.00px;height:96.00px;background:#353d4b;"></div>
<div class="r" style="left:953.50px;top:2.00px;width:1.00px;height:96.00px;background:#424c5c;"></div>
<div class="r" style="left:1288.80px;top:2.00px;width:1.00px;height:96.00px;background:#353d4b;"></div>
<div class="r" style="left:1289.80px;top:2.00px;width:1.00px;height:96.00px;background:#424c5c;"></div>
<div class="r" style="left:1511.90px;top:2.00px;width:1.00px;height:96.00px;background:#353d4b;"></div>
<div class="r" style="left:1512.90px;top:2.00px;width:1.00px;height:96.00px;background:#424c5c;"></div>
<div class="r" style="left:1599.10px;top:2.00px;width:1.00px;height:96.00px;background:#353d4b;"></div>
<div class="r" style="left:1600.10px;top:2.00px;width:1.00px;height:96.00px;background:#424c5c;"></div>
<svg class="r" style="left:298px;top:132px" width="18" height="17" viewBox="0 0 18 17"><path d="M1 9 L9 1.5 L17 9 L15 9 L15 15.5 L3 15.5 L3 9 Z" fill="#8d96a6"/><path d="M1 9 L9 1.5 L17 9" fill="none" stroke="#aab2c0" stroke-width="1.6"/><rect x="7.3" y="10" width="3.4" height="5.5" fill="#475165"/></svg>
<div class="t" style="top:136.00px;font-size:12.5px;color:#d9dce2;left:322.00px;">3D</div>
<svg class="r" style="left:433px;top:133px" width="16" height="16" viewBox="0 0 16 16" opacity="0.55"><rect x="1" y="1.5" width="9" height="12" fill="#cfd3da"/><rect x="7" y="5.5" width="8" height="9" fill="#e3e6ea" stroke="#8f97a6" stroke-width="0.6"/></svg>
<div class="t" style="top:136.00px;font-size:12.5px;color:#d9dce2;letter-spacing:0.12px;left:458.00px;">1st Floor</div>
<svg class="r" style="left:569px;top:133px" width="16" height="16" viewBox="0 0 16 16" opacity="0.55"><rect x="1" y="1.5" width="9" height="12" fill="#cfd3da"/><rect x="7" y="5.5" width="8" height="9" fill="#e3e6ea" stroke="#8f97a6" stroke-width="0.6"/></svg>
<div class="t" style="top:136.00px;font-size:12.5px;color:#d9dce2;letter-spacing:0.12px;left:594.00px;">1st Floor- Existing</div>
<svg class="r" style="left:723px;top:133px" width="16" height="16" viewBox="0 0 16 16" opacity="0.55"><rect x="1" y="1.5" width="9" height="12" fill="#cfd3da"/><rect x="7" y="5.5" width="8" height="9" fill="#e3e6ea" stroke="#8f97a6" stroke-width="0.6"/></svg>
<div class="t" style="top:136.00px;font-size:12.5px;color:#d9dce2;letter-spacing:0.12px;left:748.00px;">1st Floor- Proposed</div>
<svg class="r" style="left:888px;top:133px" width="16" height="16" viewBox="0 0 16 16" opacity="0.55"><rect x="1" y="1.5" width="9" height="12" fill="#cfd3da"/><rect x="7" y="5.5" width="8" height="9" fill="#e3e6ea" stroke="#8f97a6" stroke-width="0.6"/></svg>
<div class="t" style="top:136.00px;font-size:12.5px;color:#d9dce2;letter-spacing:0.12px;left:913.00px;">Foundation</div>
<svg class="r" style="left:1024px;top:133px" width="16" height="16" viewBox="0 0 16 16" opacity="0.55"><rect x="1" y="1.5" width="9" height="12" fill="#cfd3da"/><rect x="7" y="5.5" width="8" height="9" fill="#e3e6ea" stroke="#8f97a6" stroke-width="0.6"/></svg>
<div class="t" style="top:136.00px;font-size:12.5px;color:#d9dce2;letter-spacing:0.12px;left:1049.00px;">Ground Floor</div>
<div class="r" style="left:1155.00px;top:131.00px;width:189.20px;height:21.00px;background:#222933;"></div>
<svg class="r" style="left:1159px;top:133px" width="16" height="16" viewBox="0 0 16 16" opacity="1"><rect x="1" y="1.5" width="9" height="12" fill="#cfd3da"/><rect x="7" y="5.5" width="8" height="9" fill="#e3e6ea" stroke="#8f97a6" stroke-width="0.6"/></svg>
<div class="t" style="top:136.00px;font-size:12.5px;color:#ffffff;font-weight:700;letter-spacing:0.08px;left:1184.00px;">Ground Floor- Existing</div>
<svg class="r" style="left:1328px;top:135px" width="12" height="12" viewBox="0 0 12 12"><path d="M1.5 1.5 L10.5 10.5 M10.5 1.5 L1.5 10.5" stroke="#d5d8de" stroke-width="1.7"/></svg>
<svg class="r" style="left:2545px;top:136px" width="10" height="10" viewBox="0 0 10 10"><path d="M0.5 1.5 H9.5" stroke="#c9ccd3" stroke-width="1.2"/><path d="M0.8 4 L9.2 4 L5 8.5 Z" fill="#c9ccd3"/></svg>
<svg class="r" style="left:0;top:0" width="2560" height="1358" viewBox="0 0 2560 1358" font-family="Liberation Sans, sans-serif">
<defs><pattern id="hat" patternUnits="userSpaceOnUse" width="21" height="21" x="3" y="0"><rect width="21" height="21" fill="#533437"/><path d="M-1 22 L22 -1" stroke="#f0d8d8" stroke-width="0.75"/></pattern></defs>
<rect x="1121.2" y="372.4" width="600.6" height="885.7" fill="none" stroke="#dcdcdc" stroke-width="1" />
<polygon points="1215.9,428.1 1209.5,443.3 1197.9,454.8 1182.7,461.0 1166.4,461.0 1151.2,454.6 1139.7,443.0 1133.5,427.8 1133.5,411.5 1139.9,396.3 1151.5,384.8 1166.7,378.6 1183.0,378.6 1198.2,385.0 1209.7,396.6 1215.9,411.8" fill="none" stroke="#e4e4e4" stroke-width="0.8" /><line x1="1174.7" y1="419.8" x2="1215.9" y2="423.5" stroke="#e4e4e4" stroke-width="0.7" /><line x1="1174.7" y1="419.8" x2="1210.2" y2="441.0" stroke="#e4e4e4" stroke-width="0.7" /><line x1="1174.7" y1="419.8" x2="1199.0" y2="453.3" stroke="#e4e4e4" stroke-width="0.7" /><line x1="1174.7" y1="419.8" x2="1186.8" y2="459.4" stroke="#e4e4e4" stroke-width="0.7" /><line x1="1174.7" y1="419.8" x2="1167.5" y2="460.5" stroke="#e4e4e4" stroke-width="0.7" /><line x1="1174.7" y1="419.8" x2="1155.5" y2="456.5" stroke="#e4e4e4" stroke-width="0.7" /><line x1="1174.7" y1="419.8" x2="1142.5" y2="445.7" stroke="#e4e4e4" stroke-width="0.7" /><line x1="1174.7" y1="419.8" x2="1134.3" y2="428.9" stroke="#e4e4e4" stroke-width="0.7" /><line x1="1174.7" y1="419.8" x2="1134.2" y2="411.4" stroke="#e4e4e4" stroke-width="0.7" /><line x1="1174.7" y1="419.8" x2="1138.2" y2="400.2" stroke="#e4e4e4" stroke-width="0.7" /><line x1="1174.7" y1="419.8" x2="1154.4" y2="383.7" stroke="#e4e4e4" stroke-width="0.7" /><line x1="1174.7" y1="419.8" x2="1168.6" y2="378.9" stroke="#e4e4e4" stroke-width="0.7" /><line x1="1174.7" y1="419.8" x2="1186.9" y2="380.3" stroke="#e4e4e4" stroke-width="0.7" /><line x1="1174.7" y1="419.8" x2="1192.8" y2="382.6" stroke="#e4e4e4" stroke-width="0.7" /><line x1="1174.7" y1="419.8" x2="1207.1" y2="394.1" stroke="#e4e4e4" stroke-width="0.7" /><line x1="1174.7" y1="419.8" x2="1215.0" y2="410.3" stroke="#e4e4e4" stroke-width="0.7" />
<polygon points="1710.3,428.1 1703.9,443.3 1692.3,454.8 1677.1,461.0 1660.8,461.0 1645.6,454.6 1634.1,443.0 1627.9,427.8 1627.9,411.5 1634.3,396.3 1645.9,384.8 1661.1,378.6 1677.4,378.6 1692.6,385.0 1704.1,396.6 1710.3,411.8" fill="none" stroke="#e4e4e4" stroke-width="0.8" /><line x1="1669.1" y1="419.8" x2="1709.6" y2="428.2" stroke="#e4e4e4" stroke-width="0.7" /><line x1="1669.1" y1="419.8" x2="1704.3" y2="441.5" stroke="#e4e4e4" stroke-width="0.7" /><line x1="1669.1" y1="419.8" x2="1696.5" y2="450.8" stroke="#e4e4e4" stroke-width="0.7" /><line x1="1669.1" y1="419.8" x2="1682.1" y2="459.1" stroke="#e4e4e4" stroke-width="0.7" /><line x1="1669.1" y1="419.8" x2="1660.0" y2="460.2" stroke="#e4e4e4" stroke-width="0.7" /><line x1="1669.1" y1="419.8" x2="1648.5" y2="455.7" stroke="#e4e4e4" stroke-width="0.7" /><line x1="1669.1" y1="419.8" x2="1636.8" y2="445.6" stroke="#e4e4e4" stroke-width="0.7" /><line x1="1669.1" y1="419.8" x2="1629.4" y2="431.6" stroke="#e4e4e4" stroke-width="0.7" /><line x1="1669.1" y1="419.8" x2="1629.3" y2="408.5" stroke="#e4e4e4" stroke-width="0.7" /><line x1="1669.1" y1="419.8" x2="1634.3" y2="397.4" stroke="#e4e4e4" stroke-width="0.7" /><line x1="1669.1" y1="419.8" x2="1647.6" y2="384.5" stroke="#e4e4e4" stroke-width="0.7" /><line x1="1669.1" y1="419.8" x2="1661.4" y2="379.2" stroke="#e4e4e4" stroke-width="0.7" /><line x1="1669.1" y1="419.8" x2="1679.4" y2="379.7" stroke="#e4e4e4" stroke-width="0.7" /><line x1="1669.1" y1="419.8" x2="1689.3" y2="383.7" stroke="#e4e4e4" stroke-width="0.7" /><line x1="1669.1" y1="419.8" x2="1702.5" y2="395.4" stroke="#e4e4e4" stroke-width="0.7" /><line x1="1669.1" y1="419.8" x2="1709.7" y2="411.9" stroke="#e4e4e4" stroke-width="0.7" />
<rect x="1348.2" y="392.0" width="173.5" height="26.6" fill="none" stroke="#3975b6" stroke-width="0.8" />
<text x="1349.5" y="402.6" font-size="10.6" fill="#3975b6">Existing Trees within 3.25m to the</text>
<text x="1349.5" y="414.2" font-size="10.6" fill="#3975b6">back wall.</text>
<line x1="1348.2" y1="398.9" x2="1212.5" y2="398.9" stroke="#3975b6" stroke-width="0.8" />
<path d="M1226 395.8 L1212.5 398.9 L1226 402" fill="none" stroke="#3975b6" stroke-width="0.8"/>
<line x1="1521.7" y1="411.7" x2="1626.0" y2="411.7" stroke="#3975b6" stroke-width="0.8" />
<path d="M1612.5 408.6 L1626 411.7 L1612.5 414.8" fill="none" stroke="#3975b6" stroke-width="0.8"/>
<circle cx="1515.3" cy="505.7" r="57" fill="none" stroke="#f2f2f2" stroke-width="2"/>
<polygon points="1541.9,457.7 1461.9,527.3 1521.5,561.8" fill="#cdcdcd" />
<text transform="translate(1541.2,451) scale(0.74,1)" font-size="43.5" font-weight="700" fill="#f4f4f4" stroke="#f4f4f4" stroke-width="0.9">N</text>
<rect x="1242.3" y="607.8" width="426.9" height="130.3" fill="#cbcbcb" />
<rect x="1342.6" y="738.0" width="326.6" height="143.5" fill="#cbcbcb" />
<rect x="1342.6" y="823.3" width="111.6" height="233.1" fill="#cbcbcb" />
<rect x="1416.0" y="813.9" width="41.7" height="9.4" fill="#cbcbcb" />
<rect x="1454.0" y="823.3" width="38.2" height="58.2" fill="#cbcbcb" />
<rect x="1453.7" y="906.0" width="11.4" height="42.8" fill="#cbcbcb" />
<rect x="1342.8" y="1070.2" width="107.4" height="40.6" fill="#cbcbcb" />
<rect x="1380.1" y="1056.0" width="45.7" height="10.5" fill="#cbcbcb" />
<polygon points="1464.5,895.3 1669.2,895.3 1669.2,1105.1 1634.7,1105.1 1634.7,1138.5 1593.1,1167.7 1545.5,1167.7 1503.9,1138.5 1503.9,1110.8 1464.5,1110.8" fill="#cbcbcb" />
<rect x="1161.3" y="815.8" width="167.1" height="295.0" fill="#8989fd" />
<rect x="1343.2" y="824.4" width="75.7" height="44.5" fill="#d2d2d2" />
<rect x="1343.2" y="868.9" width="44.4" height="76.1" fill="#d2d2d2" />
<rect x="1226.7" y="593.1" width="32.1" height="14.7" fill="none" stroke="#f3e3e3" stroke-width="3.0" />
<rect x="1305.8" y="593.1" width="39.4" height="14.7" fill="none" stroke="#f3e3e3" stroke-width="3.0" />
<rect x="1476.0" y="593.1" width="22.9" height="14.7" fill="none" stroke="#f3e3e3" stroke-width="3.0" />
<rect x="1650.4" y="593.1" width="34.8" height="14.7" fill="none" stroke="#f3e3e3" stroke-width="3.0" />
<rect x="1226.7" y="593.1" width="15.6" height="108.9" fill="none" stroke="#f3e3e3" stroke-width="3.0" />
<rect x="1226.7" y="738.1" width="116.1" height="15.7" fill="none" stroke="#f3e3e3" stroke-width="3.0" />
<rect x="1328.3" y="607.8" width="14.0" height="100.5" fill="none" stroke="#f3e3e3" stroke-width="3.0" />
<rect x="1242.3" y="683.9" width="28.4" height="13.8" fill="none" stroke="#f3e3e3" stroke-width="3.0" />
<rect x="1302.0" y="683.9" width="26.3" height="13.8" fill="none" stroke="#f3e3e3" stroke-width="3.0" />
<rect x="1477.6" y="593.1" width="15.0" height="99.6" fill="none" stroke="#f3e3e3" stroke-width="3.0" />
<rect x="1492.6" y="671.4" width="25.1" height="13.8" fill="none" stroke="#f3e3e3" stroke-width="3.0" />
<rect x="1669.2" y="593.1" width="16.0" height="526.8" fill="none" stroke="#f3e3e3" stroke-width="3.0" />
<rect x="1647.3" y="671.4" width="21.9" height="13.8" fill="none" stroke="#f3e3e3" stroke-width="3.0" />
<rect x="1654.8" y="749.4" width="14.4" height="69.5" fill="none" stroke="#f3e3e3" stroke-width="3.0" />
<rect x="1654.9" y="974.5" width="14.3" height="68.0" fill="none" stroke="#f3e3e3" stroke-width="3.0" />
<rect x="1327.8" y="753.8" width="15.0" height="5.6" fill="none" stroke="#f3e3e3" stroke-width="3.0" />
<rect x="1327.8" y="794.5" width="15.0" height="21.3" fill="none" stroke="#f3e3e3" stroke-width="3.0" />
<rect x="1146.3" y="799.9" width="15.0" height="326.3" fill="none" stroke="#f3e3e3" stroke-width="3.0" />
<rect x="1146.3" y="799.9" width="18.1" height="15.9" fill="none" stroke="#f3e3e3" stroke-width="3.0" />
<rect x="1206.4" y="799.9" width="6.9" height="15.9" fill="none" stroke="#f3e3e3" stroke-width="3.0" />
<rect x="1319.0" y="799.9" width="23.8" height="15.9" fill="none" stroke="#f3e3e3" stroke-width="3.0" />
<rect x="1328.4" y="815.8" width="14.2" height="310.4" fill="none" stroke="#f3e3e3" stroke-width="3.0" />
<rect x="1146.3" y="1110.8" width="45.0" height="15.4" fill="none" stroke="#f3e3e3" stroke-width="3.0" />
<rect x="1303.4" y="1110.8" width="53.2" height="15.4" fill="none" stroke="#f3e3e3" stroke-width="3.0" />
<rect x="1342.8" y="813.9" width="73.2" height="9.4" fill="none" stroke="#f3e3e3" stroke-width="3.0" />
<rect x="1457.7" y="813.9" width="34.5" height="9.4" fill="none" stroke="#f3e3e3" stroke-width="3.0" />
<rect x="1477.8" y="823.3" width="14.4" height="6.1" fill="none" stroke="#f3e3e3" stroke-width="3.0" />
<rect x="1477.6" y="871.4" width="14.6" height="10.1" fill="none" stroke="#f3e3e3" stroke-width="3.0" />
<rect x="1454.2" y="881.5" width="215.0" height="13.8" fill="none" stroke="#f3e3e3" stroke-width="3.0" />
<rect x="1454.2" y="881.5" width="10.4" height="24.9" fill="none" stroke="#f3e3e3" stroke-width="3.0" />
<rect x="1454.2" y="948.4" width="10.4" height="107.9" fill="none" stroke="#f3e3e3" stroke-width="3.0" />
<rect x="1426.3" y="1056.3" width="38.3" height="13.9" fill="none" stroke="#f3e3e3" stroke-width="3.0" />
<rect x="1450.2" y="1070.2" width="14.4" height="56.0" fill="none" stroke="#f3e3e3" stroke-width="3.0" />
<rect x="1447.4" y="1110.8" width="56.5" height="15.4" fill="none" stroke="#f3e3e3" stroke-width="3.0" />
<rect x="1634.7" y="1105.1" width="34.5" height="14.8" fill="none" stroke="#f3e3e3" stroke-width="3.0" />
<polygon points="1489.5,1126.2 1503.9,1126.2 1503.9,1138.5 1495.5,1154.4 1489.5,1150.0" fill="none" stroke="#f3e3e3" stroke-width="3.0" />
<polygon points="1634.7,1119.9 1649.1,1119.9 1649.1,1150.0 1643.1,1154.4 1634.7,1138.5" fill="none" stroke="#f3e3e3" stroke-width="3.0" />
<polygon points="1537.7,1185.2 1545.9,1185.2 1545.9,1169.0 1543.5,1167.2 1535.2,1183.4" fill="none" stroke="#f3e3e3" stroke-width="3.0" />
<polygon points="1600.9,1185.2 1592.7,1185.2 1592.7,1169.0 1595.1,1167.2 1603.4,1183.4" fill="none" stroke="#f3e3e3" stroke-width="3.0" />
<rect x="1356.6" y="1110.8" width="13.1" height="15.4" fill="#533437" stroke="#f3e3e3" stroke-width="1.1" />
<rect x="1433.6" y="1110.8" width="13.8" height="15.4" fill="#533437" stroke="#f3e3e3" stroke-width="1.1" />
<rect x="1226.4" y="592.8" width="32.7" height="15.3" fill="url(#hat)" />
<rect x="1305.5" y="592.8" width="40.0" height="15.3" fill="url(#hat)" />
<rect x="1475.7" y="592.8" width="23.5" height="15.3" fill="url(#hat)" />
<rect x="1650.1" y="592.8" width="35.4" height="15.3" fill="url(#hat)" />
<rect x="1226.4" y="592.8" width="16.2" height="109.5" fill="url(#hat)" />
<rect x="1226.4" y="737.8" width="116.7" height="16.3" fill="url(#hat)" />
<rect x="1328.0" y="607.5" width="14.6" height="101.1" fill="url(#hat)" />
<rect x="1242.0" y="683.6" width="29.0" height="14.4" fill="url(#hat)" />
<rect x="1301.7" y="683.6" width="26.9" height="14.4" fill="url(#hat)" />
<rect x="1477.3" y="592.8" width="15.6" height="100.2" fill="url(#hat)" />
<rect x="1492.3" y="671.1" width="25.7" height="14.4" fill="url(#hat)" />
<rect x="1668.9" y="592.8" width="16.6" height="527.4" fill="url(#hat)" />
<rect x="1647.0" y="671.1" width="22.5" height="14.4" fill="url(#hat)" />
<rect x="1654.5" y="749.1" width="15.0" height="70.1" fill="url(#hat)" />
<rect x="1654.6" y="974.2" width="14.9" height="68.6" fill="url(#hat)" />
<rect x="1327.5" y="753.5" width="15.6" height="6.2" fill="url(#hat)" />
<rect x="1327.5" y="794.2" width="15.6" height="21.9" fill="url(#hat)" />
<rect x="1146.0" y="799.6" width="15.6" height="326.9" fill="url(#hat)" />
<rect x="1146.0" y="799.6" width="18.7" height="16.5" fill="url(#hat)" />
<rect x="1206.1" y="799.6" width="7.5" height="16.5" fill="url(#hat)" />
<rect x="1318.7" y="799.6" width="24.4" height="16.5" fill="url(#hat)" />
<rect x="1328.1" y="815.5" width="14.8" height="311.0" fill="url(#hat)" />
<rect x="1146.0" y="1110.5" width="45.6" height="16.0" fill="url(#hat)" />
<rect x="1303.1" y="1110.5" width="53.8" height="16.0" fill="url(#hat)" />
<rect x="1342.5" y="813.6" width="73.8" height="10.0" fill="url(#hat)" />
<rect x="1457.4" y="813.6" width="35.1" height="10.0" fill="url(#hat)" />
<rect x="1477.5" y="823.0" width="15.0" height="6.7" fill="url(#hat)" />
<rect x="1477.3" y="871.1" width="15.2" height="10.7" fill="url(#hat)" />
<rect x="1453.9" y="881.2" width="215.6" height="14.4" fill="url(#hat)" />
<rect x="1453.9" y="881.2" width="11.0" height="25.5" fill="url(#hat)" />
<rect x="1453.9" y="948.1" width="11.0" height="108.5" fill="url(#hat)" />
<rect x="1426.0" y="1056.0" width="38.9" height="14.5" fill="url(#hat)" />
<rect x="1449.9" y="1069.9" width="15.0" height="56.6" fill="url(#hat)" />
<rect x="1447.1" y="1110.5" width="57.1" height="16.0" fill="url(#hat)" />
<rect x="1634.4" y="1104.8" width="35.1" height="15.4" fill="url(#hat)" />
<polygon points="1489.5,1126.2 1503.9,1126.2 1503.9,1138.5 1495.5,1154.4 1489.5,1150.0" fill="url(#hat)" stroke="url(#hat)" stroke-width="0.6" />
<polygon points="1634.7,1119.9 1649.1,1119.9 1649.1,1150.0 1643.1,1154.4 1634.7,1138.5" fill="url(#hat)" stroke="url(#hat)" stroke-width="0.6" />
<polygon points="1537.7,1185.2 1545.9,1185.2 1545.9,1169.0 1543.5,1167.2 1535.2,1183.4" fill="url(#hat)" stroke="url(#hat)" stroke-width="0.6" />
<polygon points="1600.9,1185.2 1592.7,1185.2 1592.7,1169.0 1595.1,1167.2 1603.4,1183.4" fill="url(#hat)" stroke="url(#hat)" stroke-width="0.6" />
<rect x="1348.3" y="1120.6" width="8.3" height="5.6" fill="none" stroke="#f3e3e3" stroke-width="0.9" />
<rect x="1447.0" y="1120.6" width="6.8" height="5.6" fill="none" stroke="#f3e3e3" stroke-width="0.9" />
<rect x="1161.3" y="815.8" width="167.1" height="295.0" fill="none" stroke="#e9e9ff" stroke-width="1" />
<rect x="1258.8" y="591.5" width="47.0" height="17.0" fill="#222933" stroke="#e8e8e8" stroke-width="0.9" /><line x1="1257.0" y1="601.2" x2="1307.6" y2="601.2" stroke="#e8e8e8" stroke-width="0.8" /><line x1="1257.0" y1="604.8" x2="1307.6" y2="604.8" stroke="#e8e8e8" stroke-width="0.8" /><line x1="1257.0" y1="599.7" x2="1257.0" y2="604.8" stroke="#e8e8e8" stroke-width="0.8" /><line x1="1307.6" y1="599.7" x2="1307.6" y2="604.8" stroke="#e8e8e8" stroke-width="0.8" />
<rect x="1345.2" y="591.5" width="130.8" height="17.0" fill="#222933" stroke="#e8e8e8" stroke-width="0.9" /><line x1="1343.4" y1="601.2" x2="1477.8" y2="601.2" stroke="#e8e8e8" stroke-width="0.8" /><line x1="1343.4" y1="604.8" x2="1477.8" y2="604.8" stroke="#e8e8e8" stroke-width="0.8" /><line x1="1343.4" y1="599.7" x2="1343.4" y2="604.8" stroke="#e8e8e8" stroke-width="0.8" /><line x1="1477.8" y1="599.7" x2="1477.8" y2="604.8" stroke="#e8e8e8" stroke-width="0.8" /><line x1="1377.1" y1="591.5" x2="1377.1" y2="608.5" stroke="#e8e8e8" stroke-width="0.8" /><line x1="1379.7" y1="591.5" x2="1379.7" y2="608.5" stroke="#e8e8e8" stroke-width="0.8" /><line x1="1409.0" y1="591.5" x2="1409.0" y2="608.5" stroke="#e8e8e8" stroke-width="0.8" /><line x1="1411.6" y1="591.5" x2="1411.6" y2="608.5" stroke="#e8e8e8" stroke-width="0.8" /><line x1="1440.3" y1="591.5" x2="1440.3" y2="608.5" stroke="#e8e8e8" stroke-width="0.8" /><line x1="1442.9" y1="591.5" x2="1442.9" y2="608.5" stroke="#e8e8e8" stroke-width="0.8" />
<rect x="1498.9" y="591.5" width="34.4" height="17.0" fill="#222933" stroke="#e8e8e8" stroke-width="0.9" /><line x1="1497.1" y1="601.2" x2="1535.1" y2="601.2" stroke="#e8e8e8" stroke-width="0.8" /><line x1="1497.1" y1="604.8" x2="1535.1" y2="604.8" stroke="#e8e8e8" stroke-width="0.8" /><line x1="1497.1" y1="599.7" x2="1497.1" y2="604.8" stroke="#e8e8e8" stroke-width="0.8" /><line x1="1535.1" y1="599.7" x2="1535.1" y2="604.8" stroke="#e8e8e8" stroke-width="0.8" />
<rect x="1614.7" y="591.5" width="33.8" height="17.0" fill="#222933" stroke="#e8e8e8" stroke-width="0.9" /><line x1="1612.9" y1="601.2" x2="1650.3" y2="601.2" stroke="#e8e8e8" stroke-width="0.8" /><line x1="1612.9" y1="604.8" x2="1650.3" y2="604.8" stroke="#e8e8e8" stroke-width="0.8" /><line x1="1612.9" y1="599.7" x2="1612.9" y2="604.8" stroke="#e8e8e8" stroke-width="0.8" /><line x1="1650.3" y1="599.7" x2="1650.3" y2="604.8" stroke="#e8e8e8" stroke-width="0.8" />
<rect x="1213.3" y="798.6" width="105.7" height="17.5" fill="#222933" stroke="#e8e8e8" stroke-width="0.9" /><line x1="1211.5" y1="808.6" x2="1320.8" y2="808.6" stroke="#e8e8e8" stroke-width="0.8" /><line x1="1211.5" y1="812.2" x2="1320.8" y2="812.2" stroke="#e8e8e8" stroke-width="0.8" /><line x1="1211.5" y1="807.1" x2="1211.5" y2="812.2" stroke="#e8e8e8" stroke-width="0.8" /><line x1="1320.8" y1="807.1" x2="1320.8" y2="812.2" stroke="#e8e8e8" stroke-width="0.8" /><line x1="1247.0" y1="798.6" x2="1247.0" y2="816.1" stroke="#e8e8e8" stroke-width="0.8" /><line x1="1249.6" y1="798.6" x2="1249.6" y2="816.1" stroke="#e8e8e8" stroke-width="0.8" /><line x1="1282.4" y1="798.6" x2="1282.4" y2="816.1" stroke="#e8e8e8" stroke-width="0.8" /><line x1="1285.0" y1="798.6" x2="1285.0" y2="816.1" stroke="#e8e8e8" stroke-width="0.8" />
<rect x="1191.3" y="1110.8" width="112.1" height="15.4" fill="#222933" />
<line x1="1189.0" y1="1120.3" x2="1306.0" y2="1120.3" stroke="#e8e8e8" stroke-width="0.9" />
<line x1="1189.0" y1="1123.2" x2="1306.0" y2="1123.2" stroke="#e8e8e8" stroke-width="0.9" />
<line x1="1191.3" y1="1110.8" x2="1191.3" y2="1122.0" stroke="#f3e3e3" stroke-width="1" />
<line x1="1303.4" y1="1110.8" x2="1303.4" y2="1122.0" stroke="#f3e3e3" stroke-width="1" />
<rect x="1327.8" y="759.4" width="16.3" height="35.1" fill="#222933" stroke="#e8e8e8" stroke-width="0.9" />
<line x1="1336.3" y1="757.5" x2="1336.3" y2="796.5" stroke="#e8e8e8" stroke-width="0.8" />
<line x1="1339.3" y1="757.5" x2="1339.3" y2="796.5" stroke="#e8e8e8" stroke-width="0.8" />
<rect x="1536.5" y="593.1" width="75.1" height="15.7" fill="#222933" />
<line x1="1536.5" y1="593.0" x2="1536.5" y2="608.8" stroke="#e8e8e8" stroke-width="0.8" />
<line x1="1611.6" y1="593.0" x2="1611.6" y2="608.8" stroke="#e8e8e8" stroke-width="0.8" />
<rect x="1538.3" y="567.5" width="2.5" height="35.1" fill="none" stroke="#e8e8e8" stroke-width="0.8" />
<rect x="1606.6" y="567.5" width="2.2" height="35.1" fill="none" stroke="#e8e8e8" stroke-width="0.8" />
<path d="M1540.8 567.8 C1556 569 1572 584 1573.8 601.5" fill="none" stroke="#e8e8e8" stroke-width="0.8"/>
<path d="M1606.6 567.8 C1591.5 569 1575.500 584 1573.8 601.5" fill="none" stroke="#e8e8e8" stroke-width="0.8"/>
<line x1="1538.0" y1="602.6" x2="1609.0" y2="602.6" stroke="#e8e8e8" stroke-width="0.9" />
<rect x="1536.5" y="603.0" width="3.8" height="5.5" fill="#ead6ac" />
<rect x="1607.6" y="603.0" width="4.0" height="5.5" fill="#ead6ac" />
<line x1="1533.3" y1="593.0" x2="1536.5" y2="593.0" stroke="#e8e8e8" stroke-width="0.8" />
<rect x="1225.6" y="701.5" width="16.7" height="2.5" fill="#ead6ac" />
<rect x="1225.6" y="735.2" width="16.7" height="2.8" fill="#ead6ac" />
<line x1="1242.3" y1="734.0" x2="1272.0" y2="734.0" stroke="#8e8e8e" stroke-width="1.2" />
<path d="M1242.3 703.3 A30.7 30.7 0 0 1 1273.0 734.0" fill="none" stroke="#e6e6e6" stroke-width="0.9"/>
<line x1="1280.0" y1="691.2" x2="1334.0" y2="691.2" stroke="#f5ecd8" stroke-width="1.3" />
<line x1="1302.0" y1="689.6" x2="1334.0" y2="689.6" stroke="#f5ecd8" stroke-width="0.7" />
<line x1="1302.0" y1="692.8" x2="1334.0" y2="692.8" stroke="#f5ecd8" stroke-width="0.7" />
<rect x="1266.5" y="688.0" width="4.2" height="6.5" fill="#f0e6e0" />
<rect x="1164.4" y="799.9" width="3.2" height="15.9" fill="#ead6ac" />
<rect x="1203.2" y="799.9" width="3.2" height="15.9" fill="#ead6ac" />
<rect x="1167.2" y="763.6" width="2.6" height="36.3" fill="none" stroke="#e8e8e8" stroke-width="0.8" />
<path d="M1169.8 764.5 C1186 766 1201 781 1203.2 799" fill="none" stroke="#e8e8e8" stroke-width="0.8"/>
<rect x="1416.0" y="813.9" width="3.2" height="9.4" fill="#f0e4d6" />
<rect x="1454.5" y="813.9" width="3.2" height="10.6" fill="#f0e4d6" />
<line x1="1419.2" y1="824.4" x2="1419.2" y2="860.2" stroke="#2a3140" stroke-width="1.6" />
<path d="M1419.2 860.2 A35.7 35.7 0 0 0 1454.9 824.5" fill="none" stroke="#e9e9e9" stroke-width="0.9"/>
<rect x="1477.6" y="828.9" width="15.7" height="2.5" fill="#ead6ac" />
<rect x="1477.6" y="866.5" width="15.7" height="4.3" fill="#ead6ac" />
<line x1="1493.3" y1="866.2" x2="1527.7" y2="866.2" stroke="#4a5160" stroke-width="1" />
<path d="M1493.3 831.6 A34.6 34.6 0 0 1 1527.9 866.2" fill="none" stroke="#e9e9e9" stroke-width="0.9"/>
<rect x="1454.2" y="906.4" width="10.4" height="3.8" fill="#ead6ac" />
<rect x="1454.2" y="945.2" width="10.4" height="3.2" fill="#ead6ac" />
<line x1="1464.6" y1="910.2" x2="1499.7" y2="910.2" stroke="#2a3140" stroke-width="1.5" />
<path d="M1499.6 910.2 A35.0 35.0 0 0 1 1464.6 945.2" fill="none" stroke="#e9e9e9" stroke-width="0.9"/>
<rect x="1344.4" y="1053.9" width="35.1" height="17.6" fill="#222933" />
<line x1="1343.5" y1="1058.8" x2="1380.0" y2="1058.8" stroke="#e8e8e8" stroke-width="0.8" />
<line x1="1343.5" y1="1062.3" x2="1380.0" y2="1062.3" stroke="#e8e8e8" stroke-width="0.8" />
<line x1="1344.4" y1="1060.5" x2="1379.5" y2="1060.5" stroke="#e8e8e8" stroke-width="0.6" />
<rect x="1383.5" y="1066.5" width="42.3" height="5.0" fill="#222933" />
<rect x="1382.0" y="1025.1" width="2.1" height="41.4" fill="#3a4150" stroke="#e8e8e8" stroke-width="0.6" />
<path d="M1384.1 1025.3 A41.2 41.2 0 0 1 1425.3 1066.5" fill="none" stroke="#e9e9e9" stroke-width="0.9"/>
<rect x="1379.8" y="1066.0" width="3.7" height="5.5" fill="#ead6ac" />
<rect x="1423.0" y="1062.0" width="3.3" height="7.0" fill="#f0e6e0" />
<rect x="1344.0" y="825.2" width="74.3" height="43.3" fill="none" stroke="rgba(255,255,255,0.55)" stroke-width="0.8" />
<path d="M1349 945 V830 H1413" fill="none" stroke="rgba(255,255,255,0.55)" stroke-width="0.8"/>
<line x1="1387.6" y1="868.9" x2="1387.6" y2="926.0" stroke="rgba(255,255,255,0.55)" stroke-width="0.8" />
<line x1="1386.0" y1="827.0" x2="1386.0" y2="866.0" stroke="rgba(255,255,255,0.7)" stroke-width="1.1" stroke-dasharray="5 7"/>
<line x1="1399.5" y1="827.0" x2="1399.5" y2="866.0" stroke="rgba(255,255,255,0.7)" stroke-width="1.1" stroke-dasharray="5 7"/>
<line x1="1413.0" y1="827.0" x2="1413.0" y2="866.0" stroke="rgba(255,255,255,0.7)" stroke-width="1.1" stroke-dasharray="5 7"/>
<line x1="1346.0" y1="866.0" x2="1385.0" y2="866.0" stroke="rgba(255,255,255,0.7)" stroke-width="1.1" stroke-dasharray="8 4 10 5"/>
<line x1="1346.0" y1="880.0" x2="1385.0" y2="880.0" stroke="rgba(255,255,255,0.7)" stroke-width="1.1" stroke-dasharray="8 4 10 5"/>
<line x1="1346.0" y1="894.0" x2="1385.0" y2="894.0" stroke="rgba(255,255,255,0.7)" stroke-width="1.1" stroke-dasharray="8 4 10 5"/>
<line x1="1346.0" y1="908.0" x2="1385.0" y2="908.0" stroke="rgba(255,255,255,0.7)" stroke-width="1.1" stroke-dasharray="8 4 10 5"/>
<line x1="1346.0" y1="922.0" x2="1385.0" y2="922.0" stroke="rgba(255,255,255,0.7)" stroke-width="1.1" stroke-dasharray="8 4 10 5"/>
<polygon points="1348.8,944.5 1383.9,928.0 1383.9,948.2 1348.8,948.2" fill="#7f7f7f" />
<rect x="1348.8" y="949.4" width="35.1" height="11.3" fill="#7f7f7f" />
<rect x="1348.8" y="965.7" width="36.3" height="34.4" fill="#7f7f7f" />
<rect x="1386.4" y="966.3" width="11.9" height="33.8" fill="#7f7f7f" />
<rect x="1399.5" y="966.3" width="12.5" height="33.8" fill="#7f7f7f" />
<line x1="1413.3" y1="966.0" x2="1413.3" y2="1000.0" stroke="#e8e8e8" stroke-width="0.8" />
<path d="M1345 946 L1361 938.500 L1363 930 L1368 943 L1370 934.300 L1387 926.300" fill="none" stroke="#f0f0f0" stroke-width="0.9"/>
<rect x="1345.3" y="944.0" width="3.0" height="60.5" fill="#ead6ac" />
<rect x="1384.2" y="926.4" width="3.0" height="39.3" fill="#ead6ac" />
<rect x="1345.0" y="962.0" width="74.0" height="3.2" fill="#ead6ac" />
<rect x="1344.4" y="1000.6" width="73.3" height="3.3" fill="#ead6ac" />
<rect x="1344.6" y="960.9" width="4.8" height="4.8" fill="#f4e6c8" stroke="#cdb98f" stroke-width="0.5" />
<rect x="1382.9" y="961.6" width="4.8" height="4.8" fill="#f4e6c8" stroke="#cdb98f" stroke-width="0.5" />
<rect x="1413.4" y="962.1" width="4.8" height="4.8" fill="#f4e6c8" stroke="#cdb98f" stroke-width="0.5" />
<rect x="1344.6" y="1000.0" width="4.8" height="4.8" fill="#f4e6c8" stroke="#cdb98f" stroke-width="0.5" />
<rect x="1382.9" y="1000.0" width="4.8" height="4.8" fill="#f4e6c8" stroke="#cdb98f" stroke-width="0.5" />
<rect x="1412.9" y="1000.0" width="4.8" height="4.8" fill="#f4e6c8" stroke="#cdb98f" stroke-width="0.5" />
<polygon points="1505.5,1139.6 1543.5,1166.3 1535.2,1183.4 1496.3,1155.0" fill="#222933" stroke="#e8e8e8" stroke-width="0.8" /><line x1="1503.8" y1="1142.4" x2="1542.0" y2="1169.4" stroke="#e8e8e8" stroke-width="0.7" /><line x1="1502.2" y1="1145.1" x2="1540.5" y2="1172.5" stroke="#e8e8e8" stroke-width="0.7" />
<polygon points="1633.1,1139.6 1595.1,1166.3 1603.4,1183.4 1642.3,1155.0" fill="#222933" stroke="#e8e8e8" stroke-width="0.8" /><line x1="1634.8" y1="1142.4" x2="1596.6" y2="1169.4" stroke="#e8e8e8" stroke-width="0.7" /><line x1="1636.4" y1="1145.1" x2="1598.1" y2="1172.5" stroke="#e8e8e8" stroke-width="0.7" />
<rect x="1547.1" y="1167.7" width="45.1" height="17.5" fill="#222933" stroke="#e8e8e8" stroke-width="0.8" />
<rect x="1548.0" y="1171.5" width="43.3" height="3.5" fill="#6f7884" stroke="#e8e8e8" stroke-width="0.6" />
<path d="M1489.5 1150 L1537.7 1185.2 H1600.9 L1649.1 1150" fill="none" stroke="#e8e8e8" stroke-width="0.8"/>
<rect x="1161.2" y="1210.6" width="25.0" height="9.8" fill="#d4d4d4" />
<rect x="1186.2" y="1220.4" width="25.0" height="9.9" fill="#d4d4d4" />
<rect x="1211.2" y="1210.6" width="50.0" height="9.8" fill="#d4d4d4" />
<rect x="1261.1" y="1220.4" width="50.0" height="9.9" fill="#d4d4d4" />
<rect x="1311.1" y="1210.6" width="50.0" height="9.8" fill="#d4d4d4" />
<rect x="1361.0" y="1220.4" width="50.0" height="9.9" fill="#d4d4d4" />
<rect x="1411.0" y="1210.6" width="50.0" height="9.8" fill="#d4d4d4" />
<rect x="1461.0" y="1220.4" width="50.0" height="9.9" fill="#d4d4d4" />
<rect x="1510.9" y="1210.6" width="50.0" height="9.8" fill="#d4d4d4" />
<rect x="1560.9" y="1220.4" width="50.0" height="9.9" fill="#d4d4d4" />
<rect x="1610.8" y="1210.6" width="50.0" height="9.8" fill="#d4d4d4" />
<rect x="1161.2" y="1210.6" width="499.6" height="19.7" fill="none" stroke="#d4d4d4" stroke-width="0.8" />
<text transform="translate(1161,1206.4) scale(0.72,1)" font-size="15.3" fill="#ececec">0</text>
<text transform="translate(1209.7,1206.4) scale(0.72,1)" font-size="15.3" fill="#ececec">1</text>
<text transform="translate(1259.4,1206.4) scale(0.72,1)" font-size="15.3" fill="#ececec">2</text>
<text transform="translate(1309.3,1206.4) scale(0.72,1)" font-size="15.3" fill="#ececec">3</text>
<text transform="translate(1359.8,1206.4) scale(0.72,1)" font-size="15.3" fill="#ececec">4</text>
<text transform="translate(1409,1206.4) scale(0.72,1)" font-size="15.3" fill="#ececec">5</text>
<text transform="translate(1650.2,1206.4) scale(0.72,1)" font-size="15.3" fill="#ececec">10</text>
<text transform="translate(1160.7,1246.8) scale(0.709,1)" font-size="14.3" fill="#ececec">GRAPHIC SCALE: 1:100</text>
<text x="1281" y="653.9" font-size="12.3" text-anchor="middle" fill="#f1f1f1" stroke="#f1f1f1" stroke-width="0.25" opacity="0.85">WC</text>
<text x="1279" y="671.4" font-size="12.3" text-anchor="middle" fill="#f1f1f1" stroke="#f1f1f1" stroke-width="0.25" opacity="0.85">2.61 m²</text>
<text x="1505" y="748.8" font-size="12.3" text-anchor="middle" fill="#f1f1f1" stroke="#f1f1f1" stroke-width="0.25" opacity="0.85">KITCHEN &amp; DINING</text>
<text x="1503.8" y="766.3" font-size="12.3" text-anchor="middle" fill="#f1f1f1" stroke="#f1f1f1" stroke-width="0.25" opacity="0.85">32.03 m²</text>
<text x="1422.3" y="929.6" font-size="12.3" text-anchor="middle" fill="#f1f1f1" stroke="#f1f1f1" stroke-width="0.25" opacity="0.85">CORRIDOR</text>
<text x="1421.8" y="947.7" font-size="12.3" text-anchor="middle" fill="#f1f1f1" stroke="#f1f1f1" stroke-width="0.25" opacity="0.85">10.87 m²</text>
<text x="1563" y="1004.9" font-size="12.3" text-anchor="middle" fill="#f1f1f1" stroke="#f1f1f1" stroke-width="0.25" opacity="0.85">RECEPTION</text>
<text x="1562" y="1022.6" font-size="12.3" text-anchor="middle" fill="#f1f1f1" stroke="#f1f1f1" stroke-width="0.25" opacity="0.85">19.84 m²</text>
<text x="1244" y="957.5" font-size="12.3" text-anchor="middle" fill="#ececff" stroke="#ececff" stroke-width="0.25" opacity="0.9">GARAGE</text>
<text x="1243.7" y="975" font-size="12.3" text-anchor="middle" fill="#ececff" stroke="#ececff" stroke-width="0.25" opacity="0.9">19.81 m²</text>
<rect x="1378.3" y="1085.0" width="28.7" height="13.5" fill="#1b3352" />
<rect x="1378.3" y="1085.0" width="44.9" height="13.5" fill="none" stroke="#7aa0d4" stroke-width="0.8" />
<text x="1379.3" y="1095.8" font-size="11.3" fill="#93b6e0">Front</text>
</svg>
<div class="r" style="left:292.00px;top:1337.50px;width:2268.00px;height:20.50px;background:#363d4c;"></div>
<div class="r" style="left:672.00px;top:1337.50px;width:1888.00px;height:20.50px;background:#323946;"></div>
<div class="t" style="top:1341.00px;font-size:12.5px;color:#dfe2e7;left:320.00px;">1 : 100</div>
<svg class="r" style="left:676px;top:1341px" width="8" height="12" viewBox="0 0 8 12"><path d="M6.500 1 L1.500 6 L6.500 11" fill="none" stroke="#8d97a8" stroke-width="1.600"/></svg>
<div class="r" style="left:1597.00px;top:1342.00px;width:20.00px;height:9.00px;background:#7f8da5;border-radius:4.5px;"></div>
<svg class="r" style="left:2527px;top:1341px" width="8" height="12" viewBox="0 0 8 12"><path d="M1.500 1 L6.500 6 L1.500 11" fill="none" stroke="#a3acba" stroke-width="1.600"/></svg>
<svg class="r" style="left:2546px;top:1344px" width="10" height="10" viewBox="0 0 10 10"><g fill="#7c8596"><rect x="6" y="0" width="2.500" height="2.500"/><rect x="6" y="5" width="2.500" height="2.500"/><rect x="1" y="5" width="2.500" height="2.500"/></g></svg>
<div class="r" style="left:2540.00px;top:152.00px;width:20.00px;height:1185.50px;background:#323946;"></div>
<svg class="r" style="left:2544px;top:158px" width="11" height="8" viewBox="0 0 11 8"><path d="M1 6.500 L5.500 1.800 L10 6.500" fill="none" stroke="#98a1b0" stroke-width="1.700"/></svg>
<div class="r" style="left:2541.00px;top:171.00px;width:18.00px;height:1.00px;background:#3c4454;"></div>
<div class="r" style="left:2545.30px;top:736.50px;width:8.20px;height:18.50px;background:#7f8da5;border-radius:4.1px;"></div>
<svg class="r" style="left:2544px;top:1325px" width="11" height="8" viewBox="0 0 11 8"><path d="M1 1.500 L5.500 6.200 L10 1.500" fill="none" stroke="#98a1b0" stroke-width="1.700"/></svg>
<div class="r" style="left:292.00px;top:1355.20px;width:2268.00px;height:3.00px;background:#1c2129;"></div>
<div class="r" style="left:2506.00px;top:155.00px;width:33.50px;height:116.00px;background:#5b616c;border-radius:3px;"></div>
<svg class="r" style="left:2528px;top:156px" width="9" height="9" viewBox="0 0 9 9"><path d="M1.500 1.500 L7.500 7.500 M7.500 1.500 L1.500 7.500" stroke="#dcdfe4" stroke-width="1.300"/></svg>
<svg class="r" style="left:2509px;top:173px" width="28" height="28" viewBox="0 0 28 28"><rect x="2" y="2" width="18" height="18" rx="4" fill="#c9cdd3"/><circle cx="11" cy="11" r="5.500" fill="none" stroke="#8a909b" stroke-width="1.500"/><circle cx="11" cy="11" r="2" fill="#aab0ba"/><text x="14" y="25" font-size="7" font-family="Liberation Sans, sans-serif" font-weight="700" fill="#4a86c0">2D</text></svg>
<svg class="r" style="left:2519px;top:204px" width="7" height="4" viewBox="0 0 7 4"><path d="M0 0H7L3.500 4Z" fill="#4a505b"/></svg>
<div class="r" style="left:2510.00px;top:212.00px;width:26.00px;height:1.00px;background:#6b717c;"></div>
<svg class="r" style="left:2512px;top:220px" width="22" height="22" viewBox="0 0 22 22"><rect x="2" y="2" width="11" height="11" fill="#7faf5a"/><circle cx="14.500" cy="14" r="3" fill="#d0d3d8"/></svg>
<svg class="r" style="left:2519px;top:249px" width="7" height="4" viewBox="0 0 7 4"><path d="M0 0H7L3.500 4Z" fill="#4a505b"/></svg>
<svg class="r" style="left:2528px;top:259px" width="9" height="10" viewBox="0 0 9 10"><circle cx="4.500" cy="5" r="4.300" fill="#4d535e"/><path d="M1.800 3.300H7.200" stroke="#d8dbe0" stroke-width="1"/><path d="M1.800 5 H7.200 L4.500 8Z" fill="#d8dbe0"/></svg>
<div class="r" style="left:2335.00px;top:179.00px;width:38.50px;height:19.50px;background:#858585;border-radius:10px;"></div>
<div class="r" style="left:2339.00px;top:182.30px;width:13.00px;height:13.00px;background:#ffffff;border-radius:50%;"></div>
<div class="t" style="top:174.00px;font-size:13px;color:#eceef1;letter-spacing:-0.15px;left:2377.50px;text-shadow:1px 1px 1px #000;">Accelerated Graphics</div>
<div class="t" style="top:188.00px;font-size:13px;color:#eceef1;font-style:italic;left:2377.50px;text-shadow:1px 1px 1px #000;">Tech Preview</div>
<svg class="r" style="left:382.8px;top:1340.2px" width="17.2" height="11" viewBox="0 0 17.2 11"><rect x="0.00" y="0.00" width="2.150" height="2.200" fill="#cfd1d6"/><rect x="0.00" y="2.20" width="2.150" height="2.200" fill="#8d939d"/><rect x="0.00" y="4.40" width="2.150" height="2.200" fill="#cfd1d6"/><rect x="0.00" y="6.60" width="2.150" height="2.200" fill="#8d939d"/><rect x="0.00" y="8.80" width="2.150" height="2.200" fill="#cfd1d6"/><rect x="2.15" y="0.00" width="2.150" height="2.200" fill="#8d939d"/><rect x="2.15" y="2.20" width="2.150" height="2.200" fill="#cfd1d6"/><rect x="2.15" y="4.40" width="2.150" height="2.200" fill="#8d939d"/><rect x="2.15" y="6.60" width="2.150" height="2.200" fill="#cfd1d6"/><rect x="2.15" y="8.80" width="2.150" height="2.200" fill="#8d939d"/><rect x="4.30" y="0.00" width="2.150" height="2.200" fill="#cfd1d6"/><rect x="4.30" y="2.20" width="2.150" height="2.200" fill="#8d939d"/><rect x="4.30" y="4.40" width="2.150" height="2.200" fill="#cfd1d6"/><rect x="4.30" y="6.60" width="2.150" height="2.200" fill="#8d939d"/><rect x="4.30" y="8.80" width="2.150" height="2.200" fill="#cfd1d6"/><rect x="6.45" y="0.00" width="2.150" height="2.200" fill="#8d939d"/><rect x="6.45" y="2.20" width="2.150" height="2.200" fill="#cfd1d6"/><rect x="6.45" y="4.40" width="2.150" height="2.200" fill="#8d939d"/><rect x="6.45" y="6.60" width="2.150" height="2.200" fill="#cfd1d6"/><rect x="6.45" y="8.80" width="2.150" height="2.200" fill="#8d939d"/><rect x="8.60" y="0.00" width="2.150" height="2.200" fill="#cfd1d6"/><rect x="8.60" y="2.20" width="2.150" height="2.200" fill="#8d939d"/><rect x="8.60" y="4.40" width="2.150" height="2.200" fill="#cfd1d6"/><rect x="8.60" y="6.60" width="2.150" height="2.200" fill="#8d939d"/><rect x="8.60" y="8.80" width="2.150" height="2.200" fill="#cfd1d6"/><rect x="10.75" y="0.00" width="2.150" height="2.200" fill="#8d939d"/><rect x="10.75" y="2.20" width="2.150" height="2.200" fill="#cfd1d6"/><rect x="10.75" y="4.40" width="2.150" height="2.200" fill="#8d939d"/><rect x="10.75" y="6.60" width="2.150" height="2.200" fill="#cfd1d6"/><rect x="10.75" y="8.80" width="2.150" height="2.200" fill="#8d939d"/><rect x="12.90" y="0.00" width="2.150" height="2.200" fill="#cfd1d6"/><rect x="12.90" y="2.20" width="2.150" height="2.200" fill="#8d939d"/><rect x="12.90" y="4.40" width="2.150" height="2.200" fill="#cfd1d6"/><rect x="12.90" y="6.60" width="2.150" height="2.200" fill="#8d939d"/><rect x="12.90" y="8.80" width="2.150" height="2.200" fill="#cfd1d6"/><rect x="15.05" y="0.00" width="2.150" height="2.200" fill="#8d939d"/><rect x="15.05" y="2.20" width="2.150" height="2.200" fill="#cfd1d6"/><rect x="15.05" y="4.40" width="2.150" height="2.200" fill="#8d939d"/><rect x="15.05" y="6.60" width="2.150" height="2.200" fill="#cfd1d6"/><rect x="15.05" y="8.80" width="2.150" height="2.200" fill="#8d939d"/></svg>
<svg class="r" style="left:409.5px;top:1338px" width="17" height="17" viewBox="0 0 17 17"><path d="M1 5 L4.500 1.500 H16 V11.500 L12.500 15.500 H1 Z" fill="#6db5ef"/><path d="M1 5 L4.500 1.500 H16 L12.500 5Z" fill="#9fd0f7"/><path d="M12.500 5 L16 1.500 V11.500 L12.500 15.500Z" fill="#4f97d6"/><path d="M1 10 H12.500" stroke="#4f97d6" stroke-width="0.800"/></svg>
<svg class="r" style="left:435.5px;top:1338px" width="20" height="18" viewBox="0 0 20 18"><path d="M6.500 6.500 l7.0 0.0" stroke="#f3c45c" stroke-width="1.300"/><path d="M6.500 6.500 l4.9 4.9" stroke="#f3c45c" stroke-width="1.300"/><path d="M6.500 6.500 l-0.0 7.0" stroke="#f3c45c" stroke-width="1.300"/><path d="M6.500 6.500 l-4.9 4.9" stroke="#f3c45c" stroke-width="1.300"/><path d="M6.500 6.500 l-7.0 -0.0" stroke="#f3c45c" stroke-width="1.300"/><path d="M6.500 6.500 l-4.9 -4.9" stroke="#f3c45c" stroke-width="1.300"/><path d="M6.500 6.500 l0.0 -7.0" stroke="#f3c45c" stroke-width="1.300"/><path d="M6.500 6.500 l4.9 -4.9" stroke="#f3c45c" stroke-width="1.300"/><circle cx="6.500" cy="6.500" r="3.900" fill="#f3c45c" stroke="#2f3643" stroke-width="0.800"/><circle cx="14.5" cy="10.2" r="3.8" fill="#63c9d1"/><rect x="13.0" y="13.7" width="3" height="2.600" rx="0.800" fill="#eef0f3"/></svg>
<svg class="r" style="left:461px;top:1338px" width="20" height="18" viewBox="0 0 20 18"><ellipse cx="7.500" cy="15" rx="5.500" ry="1.500" fill="#07090c"/><circle cx="7.800" cy="6.800" r="6.200" fill="#d4d6da"/><circle cx="6.300" cy="5.300" r="3" fill="#ececee"/><circle cx="15.6" cy="10.2" r="3.8" fill="#63c9d1"/><rect x="14.1" y="13.7" width="3" height="2.600" rx="0.800" fill="#eef0f3"/></svg>
<svg class="r" style="left:489px;top:1338px" width="18" height="18" viewBox="0 0 18 18"><path d="M5.500 14.500 V6.500 H14.500" fill="none" stroke="#b9bec7" stroke-width="2.600"/><path d="M5.500 11 H11 V6.500" fill="none" stroke="#6aa6e0" stroke-width="1.300"/><rect x="0.500" y="10" width="2.800" height="1.600" fill="#6aa6e0"/><rect x="10.300" y="0.500" width="1.600" height="2.800" fill="#6aa6e0"/></svg>
<svg class="r" style="left:515.5px;top:1338px" width="19" height="18" viewBox="0 0 19 18"><path d="M6 14.500 V6.500 H14" fill="none" stroke="#b9bec7" stroke-width="2.600"/><rect x="0.500" y="10" width="2.800" height="1.600" fill="#6aa6e0"/><rect x="10.300" y="0.500" width="1.600" height="2.800" fill="#6aa6e0"/><circle cx="14.2" cy="10.2" r="3.8" fill="#f3c45c"/><rect x="12.7" y="13.7" width="3" height="2.600" rx="0.800" fill="#eef0f3"/></svg>
<svg class="r" style="left:545px;top:1341px" width="14" height="10" viewBox="0 0 14 10"><circle cx="3.600" cy="6.300" r="2.700" fill="none" stroke="#b9bec7" stroke-width="1.500"/><circle cx="10.400" cy="6.300" r="2.700" fill="none" stroke="#b9bec7" stroke-width="1.500"/><path d="M1.200 5.500 L3.500 0.900 M12.800 5.500 L10.500 0.900 M6.300 6 H7.700" stroke="#b9bec7" stroke-width="1.300" fill="none"/></svg>
<svg class="r" style="left:573px;top:1338px" width="12" height="18" viewBox="0 0 12 18"><circle cx="6" cy="6.8" r="4.6" fill="#63c9d1"/><rect x="4.5" y="11.099999999999998" width="3" height="2.600" rx="0.800" fill="#eef0f3"/></svg>
<svg class="r" style="left:598.5px;top:1338px" width="16" height="18" viewBox="0 0 16 18"><rect x="1" y="1.500" width="9" height="10" fill="#b9bec7"/><path d="M3 4H8M3 6.500H8M3 9H6" stroke="#5b6270" stroke-width="1"/><path d="M10 1.500 L13 4.500 V8" fill="none" stroke="#b9bec7" stroke-width="1.200"/><rect x="7" y="9" width="7" height="7" fill="none" stroke="#dfe2e6" stroke-width="1.200" stroke-dasharray="2.300 2.300"/></svg>
<svg class="r" style="left:623.5px;top:1338px" width="19" height="18" viewBox="0 0 19 18"><path d="M1.500 16 V6.500 L6 1.500 H14.500 V8 M1.500 6.500 H10.500 L14.500 1.500 M10.500 6.500 V12 M6 1.500 V6" fill="none" stroke="#b9bec7" stroke-width="1.100"/><path d="M4 8 V16 M6.500 8 V16 M9 8 V16" stroke="#c86a6a" stroke-width="1"/><circle cx="14.2" cy="10.2" r="3.8" fill="#f3c45c"/><rect x="12.7" y="13.7" width="3" height="2.600" rx="0.800" fill="#eef0f3"/></svg>
<svg class="r" style="left:650px;top:1338px" width="19" height="18" viewBox="0 0 19 18"><path d="M1.500 1 V12.500 M12.500 1 V7 M1.500 3.500 H12.500 M1.500 10.500 H8" fill="none" stroke="#b9bec7" stroke-width="1.200"/><path d="M1.500 3.500 l2.500 -1.500 v3z M12.500 3.500 l-2.500 -1.500 v3z" fill="#b9bec7"/><circle cx="13.7" cy="10.2" r="3.8" fill="#63c9d1"/><rect x="12.2" y="13.7" width="3" height="2.600" rx="0.800" fill="#eef0f3"/></svg>
<div class="r" style="left:5.00px;top:131.00px;width:285.50px;height:17.50px;background:#222933;"></div>
<div class="t" style="top:134.00px;font-size:12.5px;color:#e9ebee;left:7.50px;">Properties</div>
<svg class="r" style="left:277px;top:135px" width="11" height="11" viewBox="0 0 11 11"><path d="M1 1 L10 10 M10 1 L1 10" stroke="#e6e8ec" stroke-width="1.7"/></svg>
<div class="r" style="left:8.00px;top:150.00px;width:280.50px;height:73.00px;background:transparent;border:1px solid #485264;box-sizing:border-box;"></div>
<div class="r" style="left:11.50px;top:153.00px;width:69.50px;height:68.00px;background:transparent;border:1px solid #4c5669;box-sizing:border-box;"></div>
<svg class="r" style="left:31px;top:172px" width="32" height="32" viewBox="0 0 32 32"><rect x="1" y="1" width="18" height="27" fill="#dcdcdc"/><rect x="19" y="3" width="8" height="10" fill="#dcdcdc"/><rect x="12.5" y="12.5" width="18" height="18" fill="#e2e2e2" stroke="#b9b9b9" stroke-width="0.8" stroke-dasharray="2 1.2"/></svg>
<div class="t" style="top:183.00px;font-size:12.5px;color:#e4e6ea;left:85.50px;">Floor Plan</div>
<svg class="r" style="left:272px;top:185px" width="10" height="6" viewBox="0 0 10 6"><path d="M0.5 0.5 L9.5 0.5 L5 5.5 Z" fill="#6f7a8c"/></svg>
<div class="t" style="left:11px;top:230px;font-size:12.5px;color:#e4e6ea;width:183px;overflow:hidden">Floor Plan: Ground Floor- Existing</div>
<div class="r" style="left:7.50px;top:246.80px;width:206.00px;height:1.40px;background:#6d7a8f;"></div>
<svg class="r" style="left:199px;top:231px" width="10" height="8" viewBox="0 0 10 8"><path d="M1 1.5 L5 6 L9 1.5" fill="none" stroke="#717c8e" stroke-width="1.4"/></svg>
<svg class="r" style="left:217px;top:229px" width="12" height="13" viewBox="0 0 12 13"><rect x="0.5" y="1" width="4.5" height="4.5" fill="#e4e6ea"/><rect x="6.5" y="1" width="4.5" height="4.5" fill="#e4e6ea"/><rect x="0.5" y="7" width="4.5" height="5" fill="#e4e6ea"/><rect x="6.5" y="7" width="4.5" height="5" fill="#e4e6ea"/><path d="M2 8.5h6M7 2.5h3" stroke="#3b4453" stroke-width="1"/></svg>
<div class="t" style="top:230.00px;font-size:12.5px;color:#e4e6ea;left:232.50px;">Edit Type</div>
<div class="r" style="left:7.00px;top:251.41px;width:263.50px;height:1059.38px;background:#3b4453;"></div>
<div class="r" style="left:7.00px;top:251.91px;width:263.50px;height:20.19px;background:#222933;"></div>
<div class="t" style="top:257.00px;font-size:12.5px;color:#ffffff;font-weight:700;left:8.50px;">Graphics</div>
<svg class="r" style="left:260.5px;top:256.00px" width="6" height="7" viewBox="0 0 6 7"><path d="M0.800 3 L3 0.900 L5.200 3 M0.800 6.200 L3 4.100 L5.200 6.200" fill="none" stroke="#e6e8ec" stroke-width="1"/></svg>
<div class="r" style="left:7.00px;top:293.18px;width:263.50px;height:1.00px;background:#454f60;"></div>
<div class="t" style="top:278.00px;font-size:12.5px;color:#e4e6ea;left:15.50px;">View Scale</div>
<div class="r" style="left:132.50px;top:273.39px;width:124.50px;height:19.19px;background:#3b4453;border:1px solid #d4d7dc;box-sizing:border-box;"></div>
<div class="t" style="top:278.00px;font-size:12.5px;color:#e4e6ea;left:139.00px;">1 : 100</div>
<div class="r" style="left:7.00px;top:314.37px;width:263.50px;height:1.00px;background:#454f60;"></div>
<div class="t" style="top:299.00px;font-size:12.5px;color:#7f8999;left:15.50px;">Scale Value&nbsp;&nbsp;&nbsp; 1:</div>
<div class="t" style="top:299.00px;font-size:12.5px;color:#7f8999;left:134.50px;">100</div>
<div class="r" style="left:7.00px;top:335.56px;width:263.50px;height:1.00px;background:#454f60;"></div>
<div class="t" style="top:320.00px;font-size:12.5px;color:#e4e6ea;left:15.50px;">Display Model</div>
<div class="t" style="top:320.00px;font-size:12.5px;color:#e4e6ea;left:134.50px;">Normal</div>
<div class="r" style="left:7.00px;top:356.74px;width:263.50px;height:1.00px;background:#454f60;"></div>
<div class="t" style="top:341.00px;font-size:12.5px;color:#e4e6ea;left:15.50px;">Detail Level</div>
<div class="t" style="top:341.00px;font-size:12.5px;color:#e4e6ea;left:134.50px;">Fine</div>
<div class="r" style="left:7.00px;top:377.93px;width:263.50px;height:1.00px;background:#454f60;"></div>
<div class="t" style="top:363.00px;font-size:12.5px;color:#e4e6ea;left:15.50px;">Parts Visibility</div>
<div class="t" style="top:363.00px;font-size:12.5px;color:#e4e6ea;left:134.50px;">Show Both</div>
<div class="r" style="left:7.00px;top:399.12px;width:263.50px;height:1.00px;background:#454f60;"></div>
<div class="t" style="top:384.00px;font-size:12.5px;color:#e4e6ea;left:15.50px;">Detail Number</div>
<div class="t" style="top:384.00px;font-size:12.5px;color:#e4e6ea;left:134.50px;">1</div>
<div class="r" style="left:7.00px;top:420.31px;width:263.50px;height:1.00px;background:#454f60;"></div>
<div class="t" style="top:405.00px;font-size:12.5px;color:#e4e6ea;left:15.50px;">Rotation on Sheet</div>
<div class="t" style="top:405.00px;font-size:12.5px;color:#e4e6ea;left:134.50px;">None</div>
<div class="r" style="left:7.00px;top:441.49px;width:263.50px;height:1.00px;background:#454f60;"></div>
<div class="t" style="top:426.00px;font-size:12.5px;color:#e4e6ea;left:15.50px;">Visibility/Graphics ...</div>
<div class="r" style="left:133.50px;top:422.21px;width:123.00px;height:18.19px;background:#3b4453;border:1px solid #5c697e;box-sizing:border-box;"></div>
<div class="t" style="top:427.00px;font-size:12.5px;color:#e4e6ea;left:-5.00px;width:400px;text-align:center;">Edit...</div>
<div class="r" style="left:7.00px;top:462.68px;width:263.50px;height:1.00px;background:#454f60;"></div>
<div class="t" style="top:447.00px;font-size:12.5px;color:#e4e6ea;left:15.50px;">Graphic Display O...</div>
<div class="r" style="left:133.50px;top:443.39px;width:123.00px;height:18.19px;background:#3b4453;border:1px solid #5c697e;box-sizing:border-box;"></div>
<div class="t" style="top:448.00px;font-size:12.5px;color:#e4e6ea;left:-5.00px;width:400px;text-align:center;">Edit...</div>
<div class="r" style="left:7.00px;top:483.87px;width:263.50px;height:1.00px;background:#454f60;"></div>
<div class="t" style="top:468.00px;font-size:12.5px;color:#e4e6ea;left:15.50px;">Orientation</div>
<div class="t" style="top:468.00px;font-size:12.5px;color:#e4e6ea;left:134.50px;">Project North</div>
<div class="r" style="left:7.00px;top:505.06px;width:263.50px;height:1.00px;background:#454f60;"></div>
<div class="t" style="top:490.00px;font-size:12.5px;color:#7f8999;left:15.50px;">Wall Join Display</div>
<div class="t" style="top:490.00px;font-size:12.5px;color:#7f8999;left:134.50px;">Clean all wall joins</div>
<div class="r" style="left:7.00px;top:526.24px;width:263.50px;height:1.00px;background:#454f60;"></div>
<div class="t" style="top:511.00px;font-size:12.5px;color:#e4e6ea;left:15.50px;">Discipline</div>
<div class="t" style="top:511.00px;font-size:12.5px;color:#e4e6ea;left:134.50px;">Architectural</div>
<div class="r" style="left:7.00px;top:547.43px;width:263.50px;height:1.00px;background:#454f60;"></div>
<div class="t" style="top:532.00px;font-size:12.5px;color:#e4e6ea;left:15.50px;">Show Hidden Lines</div>
<div class="t" style="top:532.00px;font-size:12.5px;color:#e4e6ea;left:134.50px;">By Discipline</div>
<div class="r" style="left:7.00px;top:568.62px;width:263.50px;height:1.00px;background:#454f60;"></div>
<div class="t" style="top:553.00px;font-size:12.5px;color:#e4e6ea;left:15.50px;">Color Scheme Loca...</div>
<div class="t" style="top:553.00px;font-size:12.5px;color:#e4e6ea;left:134.50px;">Background</div>
<div class="r" style="left:7.00px;top:589.81px;width:263.50px;height:1.00px;background:#454f60;"></div>
<div class="t" style="top:574.00px;font-size:12.5px;color:#e4e6ea;left:15.50px;">Color Scheme</div>
<div class="r" style="left:133.50px;top:570.52px;width:123.00px;height:18.19px;background:#3b4453;border:1px solid #5c697e;box-sizing:border-box;"></div>
<div class="t" style="top:575.00px;font-size:12.5px;color:#e4e6ea;left:-5.00px;width:400px;text-align:center;">&lt;none&gt;</div>
<div class="r" style="left:7.00px;top:610.99px;width:263.50px;height:1.00px;background:#454f60;"></div>
<div class="t" style="top:596.00px;font-size:12.5px;color:#e4e6ea;left:15.50px;">System Color Sche...</div>
<div class="r" style="left:133.50px;top:591.71px;width:123.00px;height:18.19px;background:#3b4453;border:1px solid #5c697e;box-sizing:border-box;"></div>
<div class="t" style="top:596.00px;font-size:12.5px;color:#e4e6ea;left:-5.00px;width:400px;text-align:center;">Edit...</div>
<div class="r" style="left:7.00px;top:632.18px;width:263.50px;height:1.00px;background:#454f60;"></div>
<div class="t" style="top:617.00px;font-size:12.5px;color:#e4e6ea;left:15.50px;">Default Analysis Di...</div>
<div class="t" style="top:617.00px;font-size:12.5px;color:#e4e6ea;left:134.50px;">None</div>
<div class="r" style="left:7.00px;top:653.37px;width:263.50px;height:1.00px;background:#454f60;"></div>
<div class="t" style="top:638.00px;font-size:12.5px;color:#e4e6ea;left:15.50px;">Sun Path</div>
<div class="r" style="left:135.50px;top:637.17px;width:12.50px;height:12.50px;background:transparent;border:1px solid #aab1bd;box-sizing:border-box;"></div>
<div class="r" style="left:7.00px;top:654.47px;width:263.50px;height:20.19px;background:#222933;"></div>
<div class="t" style="top:659.00px;font-size:12.5px;color:#ffffff;font-weight:700;left:8.50px;">Underlay</div>
<svg class="r" style="left:260.5px;top:658.56px" width="6" height="7" viewBox="0 0 6 7"><path d="M0.800 3 L3 0.900 L5.200 3 M0.800 6.200 L3 4.100 L5.200 6.200" fill="none" stroke="#e6e8ec" stroke-width="1"/></svg>
<div class="r" style="left:7.00px;top:695.74px;width:263.50px;height:1.00px;background:#454f60;"></div>
<div class="t" style="top:680.00px;font-size:12.5px;color:#e4e6ea;left:15.50px;">Range: Base Level</div>
<div class="t" style="top:680.00px;font-size:12.5px;color:#e4e6ea;left:134.50px;">None</div>
<div class="r" style="left:7.00px;top:716.93px;width:263.50px;height:1.00px;background:#454f60;"></div>
<div class="t" style="top:702.00px;font-size:12.5px;color:#7f8999;left:15.50px;">Range: Top Level</div>
<div class="t" style="top:702.00px;font-size:12.5px;color:#7f8999;left:134.50px;">Unbounded</div>
<div class="r" style="left:7.00px;top:738.12px;width:263.50px;height:1.00px;background:#454f60;"></div>
<div class="t" style="top:723.00px;font-size:12.5px;color:#7f8999;left:15.50px;">Underlay Orientation</div>
<div class="t" style="top:723.00px;font-size:12.5px;color:#7f8999;left:134.50px;">Look down</div>
<div class="r" style="left:7.00px;top:739.22px;width:263.50px;height:20.19px;background:#222933;"></div>
<div class="t" style="top:744.00px;font-size:12.5px;color:#ffffff;font-weight:700;left:8.50px;">Extents</div>
<svg class="r" style="left:260.5px;top:743.31px" width="6" height="7" viewBox="0 0 6 7"><path d="M0.800 3 L3 0.900 L5.200 3 M0.800 6.200 L3 4.100 L5.200 6.200" fill="none" stroke="#e6e8ec" stroke-width="1"/></svg>
<div class="r" style="left:7.00px;top:780.49px;width:263.50px;height:1.00px;background:#454f60;"></div>
<div class="t" style="top:765.00px;font-size:12.5px;color:#e4e6ea;left:15.50px;">Crop View</div>
<div class="r" style="left:135.50px;top:764.30px;width:12.50px;height:12.50px;background:#8d95a3;border:1px solid #aab1bd;box-sizing:border-box;"></div>
<svg class="r" style="left:135.5px;top:764.30px" width="12.5" height="12.5" viewBox="0 0 12.5 12.5"><path d="M2.8 6.4 L5.2 8.9 L9.8 3.4" fill="none" stroke="#ffffff" stroke-width="1.6"/></svg>
<div class="r" style="left:7.00px;top:801.68px;width:263.50px;height:1.00px;background:#454f60;"></div>
<div class="t" style="top:786.00px;font-size:12.5px;color:#e4e6ea;left:15.50px;">Crop Region Visible</div>
<div class="r" style="left:135.50px;top:785.49px;width:12.50px;height:12.50px;background:#8d95a3;border:1px solid #aab1bd;box-sizing:border-box;"></div>
<svg class="r" style="left:135.5px;top:785.49px" width="12.5" height="12.5" viewBox="0 0 12.5 12.5"><path d="M2.8 6.4 L5.2 8.9 L9.8 3.4" fill="none" stroke="#ffffff" stroke-width="1.6"/></svg>
<div class="r" style="left:7.00px;top:822.87px;width:263.50px;height:1.00px;background:#454f60;"></div>
<div class="t" style="top:807.00px;font-size:12.5px;color:#e4e6ea;left:15.50px;">Annotation Crop</div>
<div class="r" style="left:135.50px;top:806.67px;width:12.50px;height:12.50px;background:transparent;border:1px solid #aab1bd;box-sizing:border-box;"></div>
<div class="r" style="left:7.00px;top:844.06px;width:263.50px;height:1.00px;background:#454f60;"></div>
<div class="t" style="top:829.00px;font-size:12.5px;color:#e4e6ea;left:15.50px;">View Range</div>
<div class="r" style="left:133.50px;top:824.77px;width:123.00px;height:18.19px;background:#3b4453;border:1px solid #5c697e;box-sizing:border-box;"></div>
<div class="t" style="top:829.00px;font-size:12.5px;color:#e4e6ea;left:-5.00px;width:400px;text-align:center;">Edit...</div>
<div class="r" style="left:7.00px;top:865.24px;width:263.50px;height:1.00px;background:#454f60;"></div>
<div class="t" style="top:850.00px;font-size:12.5px;color:#7f8999;left:15.50px;">Associated Level</div>
<div class="t" style="top:850.00px;font-size:12.5px;color:#7f8999;left:134.50px;">Ground Floor</div>
<div class="r" style="left:7.00px;top:886.43px;width:263.50px;height:1.00px;background:#454f60;"></div>
<div class="t" style="top:871.00px;font-size:12.5px;color:#e4e6ea;left:15.50px;">Scope Box</div>
<div class="t" style="top:871.00px;font-size:12.5px;color:#e4e6ea;left:134.50px;">None</div>
<div class="r" style="left:7.00px;top:907.62px;width:263.50px;height:1.00px;background:#454f60;"></div>
<div class="t" style="top:892.00px;font-size:12.5px;color:#e4e6ea;left:15.50px;">Depth Clipping</div>
<div class="r" style="left:133.50px;top:888.33px;width:123.00px;height:18.19px;background:#3b4453;border:1px solid #5c697e;box-sizing:border-box;"></div>
<div class="t" style="top:893.00px;font-size:12.5px;color:#e4e6ea;left:-5.00px;width:400px;text-align:center;">No clip</div>
<div class="r" style="left:7.00px;top:908.72px;width:263.50px;height:20.19px;background:#222933;"></div>
<div class="t" style="top:913.00px;font-size:12.5px;color:#ffffff;font-weight:700;left:8.50px;">Identity Data</div>
<svg class="r" style="left:260.5px;top:912.81px" width="6" height="7" viewBox="0 0 6 7"><path d="M0.800 3 L3 0.900 L5.200 3 M0.800 6.200 L3 4.100 L5.200 6.200" fill="none" stroke="#e6e8ec" stroke-width="1"/></svg>
<div class="r" style="left:7.00px;top:949.99px;width:263.50px;height:1.00px;background:#454f60;"></div>
<div class="t" style="top:935.00px;font-size:12.5px;color:#e4e6ea;left:15.50px;">View Template</div>
<div class="r" style="left:133.50px;top:930.71px;width:123.00px;height:18.19px;background:#3b4453;border:1px solid #5c697e;box-sizing:border-box;"></div>
<div class="t" style="top:935.00px;font-size:12.5px;color:#e4e6ea;left:-5.00px;width:400px;text-align:center;">&lt;None&gt;</div>
<div class="r" style="left:7.00px;top:971.18px;width:263.50px;height:1.00px;background:#454f60;"></div>
<div class="t" style="top:956.00px;font-size:12.5px;color:#e4e6ea;left:15.50px;">View Name</div>
<div class="t" style="top:956.00px;font-size:12.5px;color:#e4e6ea;left:134.50px;">Ground Floor- Existi...</div>
<div class="r" style="left:7.00px;top:992.37px;width:263.50px;height:1.00px;background:#454f60;"></div>
<div class="t" style="top:977.00px;font-size:12.5px;color:#7f8999;left:15.50px;">Dependency</div>
<div class="t" style="top:977.00px;font-size:12.5px;color:#7f8999;left:134.50px;">Independent</div>
<div class="r" style="left:7.00px;top:1013.56px;width:263.50px;height:1.00px;background:#454f60;"></div>
<div class="t" style="top:998.00px;font-size:12.5px;color:#e4e6ea;left:15.50px;">Title on Sheet</div>
<div class="t" style="top:998.00px;font-size:12.5px;color:#e4e6ea;left:134.50px;"></div>
<div class="r" style="left:7.00px;top:1034.74px;width:263.50px;height:1.00px;background:#454f60;"></div>
<div class="t" style="top:1019.00px;font-size:12.5px;color:#7f8999;left:15.50px;">Sheet Collection</div>
<div class="t" style="top:1019.00px;font-size:12.5px;color:#7f8999;left:134.50px;">&lt;None&gt;</div>
<div class="r" style="left:7.00px;top:1055.93px;width:263.50px;height:1.00px;background:#454f60;"></div>
<div class="t" style="top:1041.00px;font-size:12.5px;color:#7f8999;left:15.50px;">Sheet Number</div>
<div class="t" style="top:1041.00px;font-size:12.5px;color:#7f8999;letter-spacing:-0.3px;left:134.50px;">15MSTW-XXX-XX-X...</div>
<div class="r" style="left:7.00px;top:1077.12px;width:263.50px;height:1.00px;background:#454f60;"></div>
<div class="t" style="top:1062.00px;font-size:12.5px;color:#7f8999;left:15.50px;">Sheet Name</div>
<div class="t" style="top:1062.00px;font-size:12.5px;color:#7f8999;left:134.50px;">Floor Plans- Existing</div>
<div class="r" style="left:7.00px;top:1098.31px;width:263.50px;height:1.00px;background:#454f60;"></div>
<div class="t" style="top:1083.00px;font-size:12.5px;color:#7f8999;left:15.50px;">Referencing Sheet ...</div>
<div class="t" style="top:1083.00px;font-size:12.5px;color:#7f8999;left:134.50px;">&lt;None&gt;</div>
<div class="r" style="left:7.00px;top:1119.49px;width:263.50px;height:1.00px;background:#454f60;"></div>
<div class="t" style="top:1104.00px;font-size:12.5px;color:#7f8999;left:15.50px;">Referencing Sheet</div>
<div class="t" style="top:1104.00px;font-size:12.5px;color:#7f8999;letter-spacing:-0.3px;left:134.50px;">15MSTW-XXX-XX-X...</div>
<div class="r" style="left:7.00px;top:1140.68px;width:263.50px;height:1.00px;background:#454f60;"></div>
<div class="t" style="top:1125.00px;font-size:12.5px;color:#7f8999;left:15.50px;">Referencing Detail</div>
<div class="t" style="top:1125.00px;font-size:12.5px;color:#7f8999;left:134.50px;">7</div>
<div class="r" style="left:7.00px;top:1141.78px;width:263.50px;height:20.19px;background:#222933;"></div>
<div class="t" style="top:1146.00px;font-size:12.5px;color:#ffffff;font-weight:700;left:8.50px;">Phasing</div>
<svg class="r" style="left:260.5px;top:1145.88px" width="6" height="7" viewBox="0 0 6 7"><path d="M0.800 3 L3 0.900 L5.200 3 M0.800 6.200 L3 4.100 L5.200 6.200" fill="none" stroke="#e6e8ec" stroke-width="1"/></svg>
<div class="r" style="left:7.00px;top:1183.06px;width:263.50px;height:1.00px;background:#454f60;"></div>
<div class="t" style="top:1168.00px;font-size:12.5px;color:#e4e6ea;left:15.50px;">Phase Filter</div>
<div class="t" style="top:1168.00px;font-size:12.5px;color:#e4e6ea;left:134.50px;">Show All</div>
<div class="r" style="left:7.00px;top:1204.24px;width:263.50px;height:1.00px;background:#454f60;"></div>
<div class="t" style="top:1189.00px;font-size:12.5px;color:#e4e6ea;left:15.50px;">Phase</div>
<div class="t" style="top:1189.00px;font-size:12.5px;color:#e4e6ea;left:134.50px;">New Construction</div>
<div class="r" style="left:7.00px;top:1205.34px;width:263.50px;height:20.19px;background:#222933;"></div>
<div class="t" style="top:1210.00px;font-size:12.5px;color:#ffffff;font-weight:700;left:8.50px;">View to Sheet Positioning</div>
<svg class="r" style="left:260.5px;top:1209.44px" width="6" height="7" viewBox="0 0 6 7"><path d="M0.800 3 L3 0.900 L5.200 3 M0.800 6.200 L3 4.100 L5.200 6.200" fill="none" stroke="#e6e8ec" stroke-width="1"/></svg>
<div class="r" style="left:7.00px;top:1246.62px;width:263.50px;height:1.00px;background:#454f60;"></div>
<div class="t" style="top:1231.00px;font-size:12.5px;color:#e4e6ea;left:15.50px;">Saved Position</div>
<div class="t" style="top:1231.00px;font-size:12.5px;color:#e4e6ea;left:134.50px;">&lt;None&gt;</div>
<div class="r" style="left:7.00px;top:1267.81px;width:263.50px;height:1.00px;background:#454f60;"></div>
<div class="t" style="top:1252.00px;font-size:12.5px;color:#7f8999;left:15.50px;">View Anchor</div>
<div class="t" style="top:1252.00px;font-size:12.5px;color:#7f8999;left:134.50px;">View Origin</div>
<div class="r" style="left:7.00px;top:1288.99px;width:263.50px;height:1.00px;background:#454f60;"></div>
<div class="t" style="top:1274.00px;font-size:12.5px;color:#7f8999;left:15.50px;">View Position X</div>
<div class="t" style="top:1274.00px;font-size:12.5px;color:#7f8999;left:134.50px;">0.0428 m</div>
<div class="r" style="left:7.00px;top:1310.18px;width:263.50px;height:1.00px;background:#454f60;"></div>
<div class="t" style="top:1295.00px;font-size:12.5px;color:#7f8999;left:15.50px;">View Position Y</div>
<div class="t" style="top:1295.00px;font-size:12.5px;color:#7f8999;left:134.50px;">0.1735 m</div>
<div class="r" style="left:131.80px;top:272.59px;width:1.00px;height:21.19px;background:#454f60;"></div>
<div class="r" style="left:257.30px;top:272.59px;width:1.00px;height:21.19px;background:#454f60;"></div>
<div class="r" style="left:131.80px;top:293.78px;width:1.00px;height:21.19px;background:#454f60;"></div>
<div class="r" style="left:257.30px;top:293.78px;width:1.00px;height:21.19px;background:#454f60;"></div>
<div class="r" style="left:131.80px;top:314.97px;width:1.00px;height:21.19px;background:#454f60;"></div>
<div class="r" style="left:257.30px;top:314.97px;width:1.00px;height:21.19px;background:#454f60;"></div>
<div class="r" style="left:131.80px;top:336.16px;width:1.00px;height:21.19px;background:#454f60;"></div>
<div class="r" style="left:257.30px;top:336.16px;width:1.00px;height:21.19px;background:#454f60;"></div>
<div class="r" style="left:131.80px;top:357.34px;width:1.00px;height:21.19px;background:#454f60;"></div>
<div class="r" style="left:257.30px;top:357.34px;width:1.00px;height:21.19px;background:#454f60;"></div>
<div class="r" style="left:131.80px;top:378.53px;width:1.00px;height:21.19px;background:#454f60;"></div>
<div class="r" style="left:257.30px;top:378.53px;width:1.00px;height:21.19px;background:#454f60;"></div>
<div class="r" style="left:131.80px;top:399.72px;width:1.00px;height:21.19px;background:#454f60;"></div>
<div class="r" style="left:257.30px;top:399.72px;width:1.00px;height:21.19px;background:#454f60;"></div>
<div class="r" style="left:131.80px;top:420.91px;width:1.00px;height:21.19px;background:#454f60;"></div>
<div class="r" style="left:257.30px;top:420.91px;width:1.00px;height:21.19px;background:#454f60;"></div>
<div class="r" style="left:131.80px;top:442.09px;width:1.00px;height:21.19px;background:#454f60;"></div>
<div class="r" style="left:257.30px;top:442.09px;width:1.00px;height:21.19px;background:#454f60;"></div>
<div class="r" style="left:131.80px;top:463.28px;width:1.00px;height:21.19px;background:#454f60;"></div>
<div class="r" style="left:257.30px;top:463.28px;width:1.00px;height:21.19px;background:#454f60;"></div>
<div class="r" style="left:131.80px;top:484.47px;width:1.00px;height:21.19px;background:#454f60;"></div>
<div class="r" style="left:257.30px;top:484.47px;width:1.00px;height:21.19px;background:#454f60;"></div>
<div class="r" style="left:131.80px;top:505.66px;width:1.00px;height:21.19px;background:#454f60;"></div>
<div class="r" style="left:257.30px;top:505.66px;width:1.00px;height:21.19px;background:#454f60;"></div>
<div class="r" style="left:131.80px;top:526.84px;width:1.00px;height:21.19px;background:#454f60;"></div>
<div class="r" style="left:257.30px;top:526.84px;width:1.00px;height:21.19px;background:#454f60;"></div>
<div class="r" style="left:131.80px;top:548.03px;width:1.00px;height:21.19px;background:#454f60;"></div>
<div class="r" style="left:257.30px;top:548.03px;width:1.00px;height:21.19px;background:#454f60;"></div>
<div class="r" style="left:131.80px;top:569.22px;width:1.00px;height:21.19px;background:#454f60;"></div>
<div class="r" style="left:257.30px;top:569.22px;width:1.00px;height:21.19px;background:#454f60;"></div>
<div class="r" style="left:131.80px;top:590.41px;width:1.00px;height:21.19px;background:#454f60;"></div>
<div class="r" style="left:257.30px;top:590.41px;width:1.00px;height:21.19px;background:#454f60;"></div>
<div class="r" style="left:131.80px;top:611.59px;width:1.00px;height:21.19px;background:#454f60;"></div>
<div class="r" style="left:257.30px;top:611.59px;width:1.00px;height:21.19px;background:#454f60;"></div>
<div class="r" style="left:131.80px;top:632.78px;width:1.00px;height:21.19px;background:#454f60;"></div>
<div class="r" style="left:257.30px;top:632.78px;width:1.00px;height:21.19px;background:#454f60;"></div>
<div class="r" style="left:131.80px;top:675.16px;width:1.00px;height:21.19px;background:#454f60;"></div>
<div class="r" style="left:257.30px;top:675.16px;width:1.00px;height:21.19px;background:#454f60;"></div>
<div class="r" style="left:131.80px;top:696.34px;width:1.00px;height:21.19px;background:#454f60;"></div>
<div class="r" style="left:257.30px;top:696.34px;width:1.00px;height:21.19px;background:#454f60;"></div>
<div class="r" style="left:131.80px;top:717.53px;width:1.00px;height:21.19px;background:#454f60;"></div>
<div class="r" style="left:257.30px;top:717.53px;width:1.00px;height:21.19px;background:#454f60;"></div>
<div class="r" style="left:131.80px;top:759.91px;width:1.00px;height:21.19px;background:#454f60;"></div>
<div class="r" style="left:257.30px;top:759.91px;width:1.00px;height:21.19px;background:#454f60;"></div>
<div class="r" style="left:131.80px;top:781.09px;width:1.00px;height:21.19px;background:#454f60;"></div>
<div class="r" style="left:257.30px;top:781.09px;width:1.00px;height:21.19px;background:#454f60;"></div>
<div class="r" style="left:131.80px;top:802.28px;width:1.00px;height:21.19px;background:#454f60;"></div>
<div class="r" style="left:257.30px;top:802.28px;width:1.00px;height:21.19px;background:#454f60;"></div>
<div class="r" style="left:131.80px;top:823.47px;width:1.00px;height:21.19px;background:#454f60;"></div>
<div class="r" style="left:257.30px;top:823.47px;width:1.00px;height:21.19px;background:#454f60;"></div>
<div class="r" style="left:131.80px;top:844.66px;width:1.00px;height:21.19px;background:#454f60;"></div>
<div class="r" style="left:257.30px;top:844.66px;width:1.00px;height:21.19px;background:#454f60;"></div>
<div class="r" style="left:131.80px;top:865.84px;width:1.00px;height:21.19px;background:#454f60;"></div>
<div class="r" style="left:257.30px;top:865.84px;width:1.00px;height:21.19px;background:#454f60;"></div>
<div class="r" style="left:131.80px;top:887.03px;width:1.00px;height:21.19px;background:#454f60;"></div>
<div class="r" style="left:257.30px;top:887.03px;width:1.00px;height:21.19px;background:#454f60;"></div>
<div class="r" style="left:131.80px;top:929.41px;width:1.00px;height:21.19px;background:#454f60;"></div>
<div class="r" style="left:257.30px;top:929.41px;width:1.00px;height:21.19px;background:#454f60;"></div>
<div class="r" style="left:131.80px;top:950.59px;width:1.00px;height:21.19px;background:#454f60;"></div>
<div class="r" style="left:257.30px;top:950.59px;width:1.00px;height:21.19px;background:#454f60;"></div>
<div class="r" style="left:131.80px;top:971.78px;width:1.00px;height:21.19px;background:#454f60;"></div>
<div class="r" style="left:257.30px;top:971.78px;width:1.00px;height:21.19px;background:#454f60;"></div>
<div class="r" style="left:131.80px;top:992.97px;width:1.00px;height:21.19px;background:#454f60;"></div>
<div class="r" style="left:257.30px;top:992.97px;width:1.00px;height:21.19px;background:#454f60;"></div>
<div class="r" style="left:131.80px;top:1014.16px;width:1.00px;height:21.19px;background:#454f60;"></div>
<div class="r" style="left:257.30px;top:1014.16px;width:1.00px;height:21.19px;background:#454f60;"></div>
<div class="r" style="left:131.80px;top:1035.34px;width:1.00px;height:21.19px;background:#454f60;"></div>
<div class="r" style="left:257.30px;top:1035.34px;width:1.00px;height:21.19px;background:#454f60;"></div>
<div class="r" style="left:131.80px;top:1056.53px;width:1.00px;height:21.19px;background:#454f60;"></div>
<div class="r" style="left:257.30px;top:1056.53px;width:1.00px;height:21.19px;background:#454f60;"></div>
<div class="r" style="left:131.80px;top:1077.72px;width:1.00px;height:21.19px;background:#454f60;"></div>
<div class="r" style="left:257.30px;top:1077.72px;width:1.00px;height:21.19px;background:#454f60;"></div>
<div class="r" style="left:131.80px;top:1098.91px;width:1.00px;height:21.19px;background:#454f60;"></div>
<div class="r" style="left:257.30px;top:1098.91px;width:1.00px;height:21.19px;background:#454f60;"></div>
<div class="r" style="left:131.80px;top:1120.09px;width:1.00px;height:21.19px;background:#454f60;"></div>
<div class="r" style="left:257.30px;top:1120.09px;width:1.00px;height:21.19px;background:#454f60;"></div>
<div class="r" style="left:131.80px;top:1162.47px;width:1.00px;height:21.19px;background:#454f60;"></div>
<div class="r" style="left:257.30px;top:1162.47px;width:1.00px;height:21.19px;background:#454f60;"></div>
<div class="r" style="left:131.80px;top:1183.66px;width:1.00px;height:21.19px;background:#454f60;"></div>
<div class="r" style="left:257.30px;top:1183.66px;width:1.00px;height:21.19px;background:#454f60;"></div>
<div class="r" style="left:131.80px;top:1226.03px;width:1.00px;height:21.19px;background:#454f60;"></div>
<div class="r" style="left:257.30px;top:1226.03px;width:1.00px;height:21.19px;background:#454f60;"></div>
<div class="r" style="left:131.80px;top:1247.22px;width:1.00px;height:21.19px;background:#454f60;"></div>
<div class="r" style="left:257.30px;top:1247.22px;width:1.00px;height:21.19px;background:#454f60;"></div>
<div class="r" style="left:131.80px;top:1268.41px;width:1.00px;height:21.19px;background:#454f60;"></div>
<div class="r" style="left:257.30px;top:1268.41px;width:1.00px;height:21.19px;background:#454f60;"></div>
<div class="r" style="left:131.80px;top:1289.59px;width:1.00px;height:21.19px;background:#454f60;"></div>
<div class="r" style="left:257.30px;top:1289.59px;width:1.00px;height:21.19px;background:#454f60;"></div>
<div class="r" style="left:272.00px;top:252.00px;width:18.50px;height:1080.50px;background:#3e4757;"></div>
<svg class="r" style="left:274px;top:256px" width="11" height="8" viewBox="0 0 11 8"><path d="M1 6.5 L5.5 1.8 L10 6.5" fill="none" stroke="#707b8d" stroke-width="1.6"/></svg>
<div class="r" style="left:276.00px;top:270.00px;width:7.50px;height:1007.50px;background:#67758c;border-radius:3.75px;"></div>
<svg class="r" style="left:274px;top:1320px" width="11" height="8" viewBox="0 0 11 8"><path d="M1 1.500 L5.500 6.200 L10 1.500" fill="none" stroke="#b3bac6" stroke-width="1.900"/></svg>
<div class="r" style="left:5.00px;top:1332.50px;width:285.50px;height:25.50px;background:#2d3440;"></div>
<div class="r" style="left:33.80px;top:1334.00px;width:22.50px;height:21.50px;background:#3b4453;"></div>
<div class="r" style="left:59.40px;top:1334.00px;width:22.00px;height:21.50px;background:#3b4453;"></div>
<div class="r" style="left:8.50px;top:1334.00px;width:21.50px;height:21.50px;background:#3e7ea6;border-radius:2px;"></div>
<svg class="r" style="left:10px;top:1336px" width="18" height="18" viewBox="0 0 18 18"><path d="M2 3.5h9M2 7h7M2 10.500h9M2 14h7" stroke="#cfe6f5" stroke-width="1.1" stroke-dasharray="1.5 1"/><path d="M14.500 2v14" stroke="#cfe6f5" stroke-width="1"/><circle cx="14.500" cy="3" r="1.300" fill="#e9f4fb"/><circle cx="14.500" cy="15" r="1.300" fill="#e9f4fb"/></svg>
<div class="t" style="top:1337.00px;font-size:8px;color:#7fb2dd;font-weight:700;left:37.00px;">A</div>
<div class="t" style="top:1345.00px;font-size:8px;color:#d7dbe2;font-weight:700;left:37.00px;">Z</div>
<svg class="r" style="left:44px;top:1335px" width="8" height="18" viewBox="0 0 8 18"><path d="M4 1 V15 M1 12 L4 16 L7 12" fill="none" stroke="#d7dbe2" stroke-width="1.500"/></svg>
<div class="t" style="top:1337.00px;font-size:8px;color:#d7dbe2;font-weight:700;left:62.00px;">Z</div>
<div class="t" style="top:1345.00px;font-size:8px;color:#7fb2dd;font-weight:700;left:62.00px;">A</div>
<svg class="r" style="left:69px;top:1335px" width="8" height="18" viewBox="0 0 8 18"><path d="M4 1 V15 M1 12 L4 16 L7 12" fill="none" stroke="#d7dbe2" stroke-width="1.500"/></svg>
<div class="r" style="left:210.50px;top:1335.00px;width:76.50px;height:18.50px;background:transparent;border:1px solid #4f596b;box-sizing:border-box;border-radius:2px;"></div>
<div class="t" style="top:1340.00px;font-size:12.5px;color:#6f7989;left:48.50px;width:400px;text-align:center;">Apply</div>
<div class="r" style="left:308.00px;top:710.50px;width:286.00px;height:611.00px;background:#3b4453;border-radius:5px;box-shadow:0 1px 6px rgba(0,0,0,0.55);border:1px solid #2a303b;box-sizing:border-box;"></div>
<div class="r" style="left:309.00px;top:711.50px;width:284.00px;height:19.00px;background:#2d3441;border-radius:4px 4px 0 0;"></div>
<div class="t" style="top:714.00px;font-size:12.5px;color:#eceef1;letter-spacing:-0.05px;left:311.50px;">Project Browser - 0015-15 Mashiters Walk,Ro...</div>
<svg class="r" style="left:580px;top:715px" width="11" height="11" viewBox="0 0 11 11"><path d="M1 1 L10 10 M10 1 L1 10" stroke="#e6e8ec" stroke-width="1.7"/></svg>
<div class="r" style="left:337.50px;top:730.50px;width:255.50px;height:25.00px;background:#1a1f27;"></div>
<svg class="r" style="left:315px;top:734px" width="20" height="18" viewBox="0 0 20 18"><path d="M1 9 L9 1.5 L17 9 L15 9 L15 16 L3 16 L3 9 Z" fill="#cfd2d8"/><path d="M0.8 9.200 L9 1.5 L17.200 9.200" fill="none" stroke="#eef0f3" stroke-width="1.6"/><rect x="5" y="10.500" width="3.200" height="5.500" fill="#d8b46a"/><rect x="11" y="10" width="7" height="2.500" fill="#7fb6e8"/><rect x="11" y="13.500" width="7" height="2.500" fill="#7fb6e8"/></svg>
<svg class="r" style="left:341px;top:735px" width="17" height="17" viewBox="0 0 17 17"><path d="M1 5V1h4M12 1h4v4M16 12v4h-4M5 16H1v-4" fill="none" stroke="#e8eaee" stroke-width="1.500"/><path d="M4.500 6.500 L9 4.500 L12.500 6 L12.500 11 L8 13 L4.500 11.500 Z" fill="#dcdfe4"/></svg>
<svg class="r" style="left:367px;top:735px" width="17" height="17" viewBox="0 0 17 17"><rect x="0.5" y="0.5" width="16" height="16" fill="#e6e8ec"/><rect x="0.5" y="0.5" width="16" height="3.500" fill="#f7f7f8"/><path d="M3 7h3M8 7h6M3 10h3M8 10h6M3 13h3M8 13h6" stroke="#8a909b" stroke-width="1.400"/></svg>
<svg class="r" style="left:392px;top:736px" width="17" height="15" viewBox="0 0 17 15"><rect x="0.5" y="0.5" width="16" height="14" fill="#e6e8ec"/><path d="M0.5 4.500h16M0.5 8h16M0.5 11.500h16M5.500 0.5v14M11 0.5v14" stroke="#3b4453" stroke-width="1"/></svg>
<svg class="r" style="left:417px;top:735px" width="18" height="17" viewBox="0 0 18 17"><path d="M1 15.500 V6 L7 1.500 L12.500 9 L12.500 15.500 Z" fill="#e0e3e8"/><circle cx="13" cy="11.500" r="4.200" fill="#cfd3d9" stroke="#f0f1f3" stroke-width="1"/><circle cx="13" cy="11.500" r="1.500" fill="#3b4453"/></svg>
<svg class="r" style="left:443px;top:735px" width="17" height="17" viewBox="0 0 17 17"><rect x="0.5" y="0.5" width="7.500" height="9" fill="#e6e8ec"/><rect x="9.500" y="0.5" width="7" height="16" fill="#e6e8ec"/><rect x="0.5" y="11" width="16" height="5.500" fill="#e6e8ec"/></svg>
<svg class="r" style="left:468px;top:734px" width="18" height="19" viewBox="0 0 18 19"><path d="M4 1H1v17h3M14 1h3v17h-3" fill="none" stroke="#e8eaee" stroke-width="1.500"/><circle cx="7.500" cy="7.500" r="4" fill="#cdd1d7" stroke="#eef0f3" stroke-width="0.8"/><rect x="7" y="8" width="7.500" height="8" fill="#dfe2e6" stroke="#8d939e" stroke-width="0.7"/></svg>
<svg class="r" style="left:494px;top:736px" width="18" height="15" viewBox="0 0 18 15"><g fill="none" stroke="#caa26e" stroke-width="1.400" transform="rotate(-35 9 7.500)"><rect x="1.500" y="5" width="8" height="5" rx="2.500"/><rect x="8.500" y="5" width="8" height="5" rx="2.500"/></g></svg>
<div class="r" style="left:320.50px;top:767.00px;width:264.50px;height:22.50px;background:#2c333f;"></div>
<svg class="r" style="left:328px;top:769px" width="18" height="18" viewBox="0 0 18 18"><circle cx="7.500" cy="7.500" r="5.300" fill="none" stroke="#98a1af" stroke-width="1.500"/><path d="M11.500 11.500 L16.500 16.500" stroke="#98a1af" stroke-width="2"/></svg>
<div class="t" style="top:772.00px;font-size:12.5px;color:#8792a3;left:354.50px;">Search</div>
<div class="r" style="left:309px;top:797px;width:284px;height:519.5px;overflow:hidden">
<div class="r" style="left:12px;top:20px;width:0;height:415.8px;border-left:1px dotted #4b5567"></div>
<div class="r" style="left:29.5px;top:62.375px;width:0;height:267.4px;border-left:1px dotted #4b5567"></div>
<div class="r" style="left:29.5px;top:380.1875px;width:0;height:13.2px;border-left:1px dotted #4b5567"></div>
<div class="r" style="left:29.5px;top:443.75px;width:0;height:105.9px;border-left:1px dotted #4b5567"></div>
<div class="r" style="left:7.50px;top:11.20px;width:9.00px;height:1.80px;background:#cfd3d9;"></div>
<svg class="r" style="left:24.50px;top:3.00px" width="18" height="18" viewBox="0 0 18 18"><path d="M1 5V1h4M13 1h4v4M17 13v4h-4M5 17H1v-4" fill="none" stroke="#e8eaee" stroke-width="1.300" stroke-dasharray="3 1"/><path d="M4.500 7 L9.500 4.500 L13.500 6.500 L13.500 11.500 L8.500 14 L4.500 12 Z" fill="#e3e5e9"/><path d="M4.500 7 L8.500 9 L8.500 14 M8.500 9 L13.500 6.500" stroke="#a7adb8" stroke-width="0.7" fill="none"/></svg>
<div class="t" style="top:7.00px;font-size:12.5px;color:#e4e6ea;left:46.80px;">Views (all)</div>
<div class="r" style="left:13px;top:33.19px;width:11px;height:0;border-top:1px dotted #4b5567"></div>
<div class="r" style="left:25.00px;top:32.39px;width:9.00px;height:1.80px;background:#cfd3d9;"></div>
<div class="r" style="left:28.60px;top:28.69px;width:1.80px;height:9.00px;background:#cfd3d9;"></div>
<div class="t" style="top:28.00px;font-size:12.5px;color:#e4e6ea;left:42.80px;">Structural Plans</div>
<div class="r" style="left:13px;top:54.38px;width:11px;height:0;border-top:1px dotted #4b5567"></div>
<div class="r" style="left:25.00px;top:53.58px;width:9.00px;height:1.80px;background:#cfd3d9;"></div>
<div class="t" style="top:49.00px;font-size:12.5px;color:#e4e6ea;left:42.80px;">Floor Plans</div>
<div class="r" style="left:30.5px;top:75.56px;width:27px;height:0;border-top:1px dotted #4b5567"></div>
<svg class="r" style="left:59.30px;top:67.06px" width="17" height="17" viewBox="0 0 17 17"><rect x="1" y="1" width="15" height="15" fill="none" stroke="#dfe2e7" stroke-width="1.3" stroke-dasharray="4.2 1.6 1.6 1.6"/><rect x="3.6" y="3.6" width="9.8" height="9.8" fill="none" stroke="#c5cad3" stroke-width="1"/></svg>
<div class="t" style="top:70.00px;font-size:12.5px;color:#e4e6ea;left:81.00px;">1st Floor</div>
<div class="r" style="left:30.5px;top:96.75px;width:27px;height:0;border-top:1px dotted #4b5567"></div>
<svg class="r" style="left:59.30px;top:88.25px" width="17" height="17" viewBox="0 0 17 17"><rect x="1" y="1" width="15" height="15" fill="none" stroke="#dfe2e7" stroke-width="1.3" stroke-dasharray="4.2 1.6 1.6 1.6"/><rect x="3.6" y="3.6" width="9.8" height="9.8" fill="#8fc6f7" stroke="#8fc6f7" stroke-width="1"/></svg>
<div class="t" style="top:91.00px;font-size:12.5px;color:#e4e6ea;left:81.00px;">1st Floor- Existing</div>
<div class="r" style="left:30.5px;top:117.94px;width:27px;height:0;border-top:1px dotted #4b5567"></div>
<svg class="r" style="left:59.30px;top:109.44px" width="17" height="17" viewBox="0 0 17 17"><rect x="1" y="1" width="15" height="15" fill="none" stroke="#dfe2e7" stroke-width="1.3" stroke-dasharray="4.2 1.6 1.6 1.6"/><rect x="3.6" y="3.6" width="9.8" height="9.8" fill="#8fc6f7" stroke="#8fc6f7" stroke-width="1"/></svg>
<div class="t" style="top:113.00px;font-size:12.5px;color:#e4e6ea;left:81.00px;">1st Floor- Proposed</div>
<div class="r" style="left:30.5px;top:139.12px;width:27px;height:0;border-top:1px dotted #4b5567"></div>
<svg class="r" style="left:59.30px;top:130.62px" width="17" height="17" viewBox="0 0 17 17"><rect x="1" y="1" width="15" height="15" fill="none" stroke="#dfe2e7" stroke-width="1.3" stroke-dasharray="4.2 1.6 1.6 1.6"/><rect x="3.6" y="3.6" width="9.8" height="9.8" fill="none" stroke="#c5cad3" stroke-width="1"/></svg>
<div class="t" style="top:134.00px;font-size:12.5px;color:#e4e6ea;left:81.00px;">Foundation</div>
<div class="r" style="left:30.5px;top:160.31px;width:27px;height:0;border-top:1px dotted #4b5567"></div>
<svg class="r" style="left:59.30px;top:151.81px" width="17" height="17" viewBox="0 0 17 17"><rect x="1" y="1" width="15" height="15" fill="none" stroke="#dfe2e7" stroke-width="1.3" stroke-dasharray="4.2 1.6 1.6 1.6"/><rect x="3.6" y="3.6" width="9.8" height="9.8" fill="none" stroke="#c5cad3" stroke-width="1"/></svg>
<div class="t" style="top:155.00px;font-size:12.5px;color:#e4e6ea;left:81.00px;">Ground Floor</div>
<div class="r" style="left:4.00px;top:171.00px;width:262.00px;height:21.00px;background:#2e3643;"></div>
<div class="r" style="left:30.5px;top:181.50px;width:27px;height:0;border-top:1px dotted #4b5567"></div>
<svg class="r" style="left:59.30px;top:173.00px" width="17" height="17" viewBox="0 0 17 17"><rect x="1" y="1" width="15" height="15" fill="none" stroke="#dfe2e7" stroke-width="1.3" stroke-dasharray="4.2 1.6 1.6 1.6"/><rect x="3.6" y="3.6" width="9.8" height="9.8" fill="#8fc6f7" stroke="#8fc6f7" stroke-width="1"/></svg>
<div class="t" style="top:176.00px;font-size:12.5px;color:#ffffff;font-weight:700;letter-spacing:-0.15px;left:81.00px;">Ground Floor- Existing</div>
<div class="r" style="left:30.5px;top:202.69px;width:27px;height:0;border-top:1px dotted #4b5567"></div>
<svg class="r" style="left:59.30px;top:194.19px" width="17" height="17" viewBox="0 0 17 17"><rect x="1" y="1" width="15" height="15" fill="none" stroke="#dfe2e7" stroke-width="1.3" stroke-dasharray="4.2 1.6 1.6 1.6"/><rect x="3.6" y="3.6" width="9.8" height="9.8" fill="#8fc6f7" stroke="#8fc6f7" stroke-width="1"/></svg>
<div class="t" style="top:197.00px;font-size:12.5px;color:#e4e6ea;left:81.00px;">Ground Floor- Proposed</div>
<div class="r" style="left:30.5px;top:223.88px;width:27px;height:0;border-top:1px dotted #4b5567"></div>
<svg class="r" style="left:59.30px;top:215.38px" width="17" height="17" viewBox="0 0 17 17"><rect x="1" y="1" width="15" height="15" fill="none" stroke="#dfe2e7" stroke-width="1.3" stroke-dasharray="4.2 1.6 1.6 1.6"/><rect x="3.6" y="3.6" width="9.8" height="9.8" fill="none" stroke="#c5cad3" stroke-width="1"/></svg>
<div class="t" style="top:218.00px;font-size:12.5px;color:#e4e6ea;left:81.00px;">Loft</div>
<div class="r" style="left:30.5px;top:245.06px;width:27px;height:0;border-top:1px dotted #4b5567"></div>
<svg class="r" style="left:59.30px;top:236.56px" width="17" height="17" viewBox="0 0 17 17"><rect x="1" y="1" width="15" height="15" fill="none" stroke="#dfe2e7" stroke-width="1.3" stroke-dasharray="4.2 1.6 1.6 1.6"/><rect x="3.6" y="3.6" width="9.8" height="9.8" fill="#8fc6f7" stroke="#8fc6f7" stroke-width="1"/></svg>
<div class="t" style="top:240.00px;font-size:12.5px;color:#e4e6ea;left:81.00px;">Loft- Existing</div>
<div class="r" style="left:30.5px;top:266.25px;width:27px;height:0;border-top:1px dotted #4b5567"></div>
<svg class="r" style="left:59.30px;top:257.75px" width="17" height="17" viewBox="0 0 17 17"><rect x="1" y="1" width="15" height="15" fill="none" stroke="#dfe2e7" stroke-width="1.3" stroke-dasharray="4.2 1.6 1.6 1.6"/><rect x="3.6" y="3.6" width="9.8" height="9.8" fill="#8fc6f7" stroke="#8fc6f7" stroke-width="1"/></svg>
<div class="t" style="top:261.00px;font-size:12.5px;color:#e4e6ea;left:81.00px;">Loft- Proposed</div>
<div class="r" style="left:30.5px;top:287.44px;width:27px;height:0;border-top:1px dotted #4b5567"></div>
<svg class="r" style="left:59.30px;top:278.94px" width="17" height="17" viewBox="0 0 17 17"><rect x="1" y="1" width="15" height="15" fill="none" stroke="#dfe2e7" stroke-width="1.3" stroke-dasharray="4.2 1.6 1.6 1.6"/><rect x="3.6" y="3.6" width="9.8" height="9.8" fill="none" stroke="#c5cad3" stroke-width="1"/></svg>
<div class="t" style="top:282.00px;font-size:12.5px;color:#e4e6ea;left:81.00px;">Roof</div>
<div class="r" style="left:30.5px;top:308.62px;width:27px;height:0;border-top:1px dotted #4b5567"></div>
<svg class="r" style="left:59.30px;top:300.12px" width="17" height="17" viewBox="0 0 17 17"><rect x="1" y="1" width="15" height="15" fill="none" stroke="#dfe2e7" stroke-width="1.3" stroke-dasharray="4.2 1.6 1.6 1.6"/><rect x="3.6" y="3.6" width="9.8" height="9.8" fill="none" stroke="#c5cad3" stroke-width="1"/></svg>
<div class="t" style="top:303.00px;font-size:12.5px;color:#e4e6ea;left:81.00px;">Site</div>
<div class="r" style="left:30.5px;top:329.81px;width:27px;height:0;border-top:1px dotted #4b5567"></div>
<svg class="r" style="left:59.30px;top:321.31px" width="17" height="17" viewBox="0 0 17 17"><rect x="1" y="1" width="15" height="15" fill="none" stroke="#dfe2e7" stroke-width="1.3" stroke-dasharray="4.2 1.6 1.6 1.6"/><rect x="3.6" y="3.6" width="9.8" height="9.8" fill="none" stroke="#c5cad3" stroke-width="1"/></svg>
<div class="t" style="top:324.00px;font-size:12.5px;color:#e4e6ea;left:81.00px;">TOF</div>
<div class="r" style="left:13px;top:351.00px;width:11px;height:0;border-top:1px dotted #4b5567"></div>
<div class="r" style="left:25.00px;top:350.20px;width:9.00px;height:1.80px;background:#cfd3d9;"></div>
<div class="r" style="left:28.60px;top:346.50px;width:1.80px;height:9.00px;background:#cfd3d9;"></div>
<div class="t" style="top:346.00px;font-size:12.5px;color:#e4e6ea;left:42.80px;">Ceiling Plans</div>
<div class="r" style="left:13px;top:372.19px;width:11px;height:0;border-top:1px dotted #4b5567"></div>
<div class="r" style="left:25.00px;top:371.39px;width:9.00px;height:1.80px;background:#cfd3d9;"></div>
<div class="t" style="top:367.00px;font-size:12.5px;color:#e4e6ea;left:42.80px;">3D Views</div>
<div class="r" style="left:30.5px;top:393.38px;width:27px;height:0;border-top:1px dotted #4b5567"></div>
<svg class="r" style="left:59.30px;top:384.88px" width="17" height="17" viewBox="0 0 17 17"><rect x="1" y="1" width="15" height="15" fill="none" stroke="#dfe2e7" stroke-width="1.3" stroke-dasharray="4.2 1.6 1.6 1.6"/><rect x="3.6" y="3.6" width="9.8" height="9.8" fill="none" stroke="#c5cad3" stroke-width="1"/></svg>
<div class="t" style="top:388.00px;font-size:12.5px;color:#e4e6ea;left:81.00px;">3D</div>
<div class="r" style="left:13px;top:414.56px;width:11px;height:0;border-top:1px dotted #4b5567"></div>
<div class="r" style="left:25.00px;top:413.76px;width:9.00px;height:1.80px;background:#cfd3d9;"></div>
<div class="r" style="left:28.60px;top:410.06px;width:1.80px;height:9.00px;background:#cfd3d9;"></div>
<div class="t" style="top:409.00px;font-size:12.5px;color:#e4e6ea;left:42.80px;">Elevations (Building Elevation)</div>
<div class="r" style="left:13px;top:435.75px;width:11px;height:0;border-top:1px dotted #4b5567"></div>
<div class="r" style="left:25.00px;top:434.95px;width:9.00px;height:1.80px;background:#cfd3d9;"></div>
<div class="t" style="top:430.00px;font-size:12.5px;color:#e4e6ea;left:42.80px;">Sections (Building Section)</div>
<div class="r" style="left:30.5px;top:456.94px;width:27px;height:0;border-top:1px dotted #4b5567"></div>
<svg class="r" style="left:59.30px;top:448.44px" width="17" height="17" viewBox="0 0 17 17"><rect x="1" y="1" width="15" height="15" fill="none" stroke="#dfe2e7" stroke-width="1.3" stroke-dasharray="4.2 1.6 1.6 1.6"/><rect x="3.6" y="3.6" width="9.8" height="9.8" fill="none" stroke="#c5cad3" stroke-width="1"/></svg>
<div class="t" style="top:452.00px;font-size:12.5px;color:#e4e6ea;left:81.00px;">Back Elevation-Proposed</div>
<div class="r" style="left:30.5px;top:478.12px;width:27px;height:0;border-top:1px dotted #4b5567"></div>
<svg class="r" style="left:59.30px;top:469.62px" width="17" height="17" viewBox="0 0 17 17"><rect x="1" y="1" width="15" height="15" fill="none" stroke="#dfe2e7" stroke-width="1.3" stroke-dasharray="4.2 1.6 1.6 1.6"/><rect x="3.6" y="3.6" width="9.8" height="9.8" fill="none" stroke="#c5cad3" stroke-width="1"/></svg>
<div class="t" style="top:473.00px;font-size:12.5px;color:#e4e6ea;left:81.00px;">Existing Elevation</div>
<div class="r" style="left:30.5px;top:499.31px;width:27px;height:0;border-top:1px dotted #4b5567"></div>
<svg class="r" style="left:59.30px;top:490.81px" width="17" height="17" viewBox="0 0 17 17"><rect x="1" y="1" width="15" height="15" fill="none" stroke="#dfe2e7" stroke-width="1.3" stroke-dasharray="4.2 1.6 1.6 1.6"/><rect x="3.6" y="3.6" width="9.8" height="9.8" fill="#8fc6f7" stroke="#8fc6f7" stroke-width="1"/></svg>
<div class="t" style="top:494.00px;font-size:12.5px;color:#e4e6ea;left:81.00px;">Front Elevation- Existing</div>
<div class="r" style="left:30.5px;top:520.50px;width:27px;height:0;border-top:1px dotted #4b5567"></div>
<svg class="r" style="left:59.30px;top:512.00px" width="17" height="17" viewBox="0 0 17 17"><rect x="1" y="1" width="15" height="15" fill="none" stroke="#dfe2e7" stroke-width="1.3" stroke-dasharray="4.2 1.6 1.6 1.6"/><rect x="3.6" y="3.6" width="9.8" height="9.8" fill="#8fc6f7" stroke="#8fc6f7" stroke-width="1"/></svg>
<div class="t" style="top:515.00px;font-size:12.5px;color:#e4e6ea;left:81.00px;">Front Elevation- Proposed</div>
</div>
<div class="r" style="left:574.50px;top:797.00px;width:18.50px;height:519.50px;background:#3f4858;"></div>
<svg class="r" style="left:578.5px;top:804px" width="11" height="8" viewBox="0 0 11 8"><path d="M1 6.500 L5.500 1.800 L10 6.500" fill="none" stroke="#7a8597" stroke-width="1.600"/></svg>
<div class="r" style="left:580.50px;top:823.50px;width:7.50px;height:257.00px;background:#67758c;border-radius:3.75px;"></div>
<svg class="r" style="left:578.5px;top:1305px" width="11" height="8" viewBox="0 0 11 8"><path d="M1 1.500 L5.500 6.200 L10 1.500" fill="none" stroke="#b3bac6" stroke-width="1.900"/></svg>
<div class="r" style="left:2.60px;top:0.00px;width:2.80px;height:1358.00px;background:#252c37;"></div><div class="r" style="left:0.00px;top:0.00px;width:2.60px;height:19.50px;background:#585c63;"></div><div class="r" style="left:0.00px;top:19.50px;width:2.60px;height:1338.50px;background:#060709;"></div>
<div class="wm" style="left:261.3px;top:100.3px">DOMV.UK</div>
<div class="wm" style="left:1135.3px;top:117.6px">DOMV.UK</div>
<div class="wm" style="left:2071.3px;top:84.9px">DOMV.UK</div>
<div class="wm" style="left:708.5px;top:474.9px">DOMV.UK</div>
<div class="wm" style="left:1700.5px;top:484.9px">DOMV.UK</div>
<div class="wm" style="left:271.8px;top:843.6px">DOMV.UK</div>
<div class="wm n" style="left:1332.4px;top:843.8px">DOMV.UK</div>
<div class="wm" style="left:2100.5px;top:845.6px">DOMV.UK</div>
<div class="wm" style="left:754.5px;top:1133.5px">DOMV.UK</div>
<div class="wm" style="left:1765.2px;top:1115.6px">DOMV.UK</div>
</div></body></html>
